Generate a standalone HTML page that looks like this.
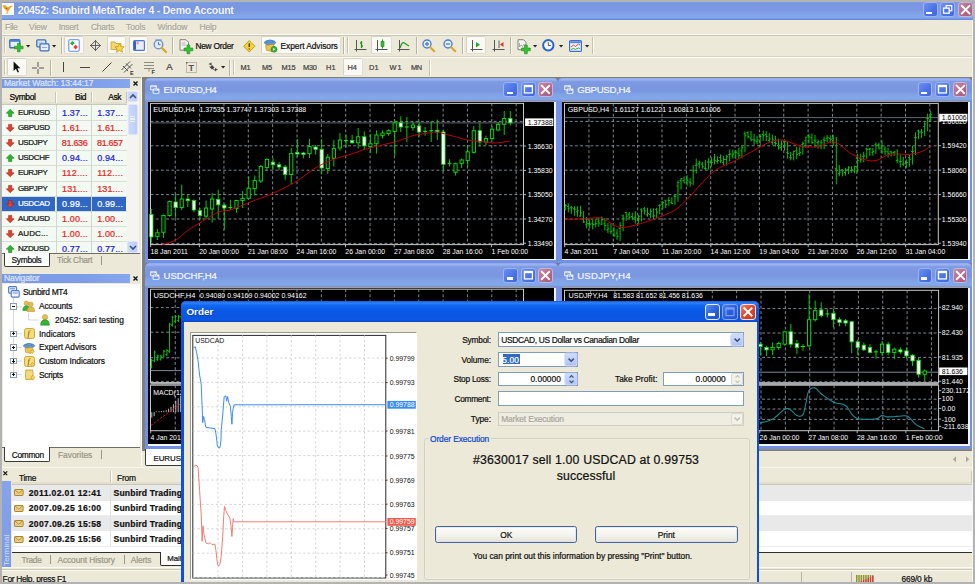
<!DOCTYPE html>
<html lang="en"><head><meta charset="utf-8"><title>20452: Sunbird MetaTrader 4 - Demo Account</title>
<style>
*{box-sizing:border-box;margin:0;padding:0}
html,body{width:975px;height:584px;overflow:hidden;background:#b3b3b3}
body{position:relative;font-family:"Liberation Sans",sans-serif;font-size:10.5px;color:#000;line-height:1}
.a{position:absolute}
.t{position:absolute;white-space:nowrap;line-height:12px;height:12px;-webkit-text-stroke-width:0.22px}
svg{position:absolute;overflow:visible}
#w{position:absolute;left:0;top:0;width:975px;height:584px;overflow:hidden}
#app{left:2px;top:2px;width:971px;height:581px;background:#ece9d8;overflow:hidden}
.title{left:0;top:0;width:971px;height:18px;background:linear-gradient(#6c8ce2 0,#7195e8 35%,#7ea5ec 80%,#7da2ea 90%,#6487e2 100%)}
.tb{border-radius:3px;border:1px solid #9db3f0;background:linear-gradient(135deg,#6f92f0,#4a72e4 60%,#4468dc)}
.tbx{background:linear-gradient(135deg,#c08aa0,#b06a86 60%,#a66080);border-color:#c9b3d8}
.cw{background:#7191e6;border-radius:6px 6px 0 0}
.cwt{left:0;top:0;right:0;height:23px;border-radius:6px 6px 0 0;background:linear-gradient(#829fea 0,#8aa9f0 12%,#7e9eec 50%,#7495e8 85%,#6c8de4 100%)}
.cb{border-radius:3px;border:1px solid #9db4f2;background:linear-gradient(135deg,#6a8ff2,#4a72e6 60%,#4166dc)}
.cbx{background:linear-gradient(135deg,#c58aa2,#b26a88 60%,#a35c7c);border-color:#c8b4dc}
.blk{background:#000}
.pt{background:#738fd6;color:#e8eefc;font-size:10.5px}
.sep{width:1px;background:#aca899;box-shadow:1px 0 0 #fff}
.prs{background:#f6f5ee;border:1px solid #c9c7ba;border-radius:2px;box-shadow:inset 1px 1px 0 #e0dfd4}
</style></head>
<body>
<div id="w">
<div class="a " style="left:2px;top:2px;width:971px;height:581px;background:#ece9d8"></div>
<div class="a " style="left:2px;top:2px;width:971px;height:17.6px;background:linear-gradient(#7aa2e8 0,#7a98e2 9%,#7b97e1 42%,#80a3e7 70%,#83aaea 87%,#6e8ee2 94%,#6a87de 100%)"></div>
<svg class="a" style="left:2px;top:3px;" width="12" height="12" viewBox="0 0 12 12"><rect x="0" y="0" width="12" height="12" fill="#fdfdfb"/><path d="M0.3 2.6 L2.6 2.2 L3 1.4 L4.2 3.2 L6 4.3 L8.2 3 L11 2.8 L8.6 4.6 L6.6 7.4 L5.6 11 L4.6 11 L4.6 7.6 L2.2 5.4 Z" fill="#e9a61c"/><path d="M4.8 8 L5.8 8 L5.4 11.2 L4.7 11.2Z" fill="#f0cf8a"/><circle cx="4.5" cy="5.5" r="0.75" fill="#e2352a"/></svg>
<div class="t " style="left:17.8px;top:4.3px;font-size:10.5px;color:#f6f8ff;font-weight:bold;letter-spacing:-0.244px;text-shadow:0 0 1px #5a78d0;-webkit-text-stroke-width:0;">20452: Sunbird MetaTrader 4 - Demo Account</div>
<div class="a tb" style="left:922.6px;top:2.1px;width:15.3px;height:15.3px;"></div>
<div class="a " style="left:926.17px;top:11.79px;width:6.12px;height:2.45px;background:#fff"></div>
<div class="a tb" style="left:940.1px;top:2.1px;width:15.3px;height:15.3px;"></div>
<svg class="a" style="left:940.1px;top:2.1px;" width="15.3" height="15.3" viewBox="0 0 15.3 15.3"><g transform="scale(1.02)"><rect x="6" y="3.5" width="5.5" height="5" fill="none" stroke="#fff" stroke-width="1.3"/><rect x="3.5" y="6" width="5.5" height="5" fill="#4a72e4" stroke="#fff" stroke-width="1.3"/></g></svg>
<div class="a tb tbx" style="left:957.7px;top:2.1px;width:15.3px;height:15.3px;"></div>
<svg class="a" style="left:957.7px;top:2.1px;" width="15.3" height="15.3" viewBox="0 0 15.3 15.3"><g transform="scale(1.02)"><path d="M3.8 3.8 L11.2 11.2 M11.2 3.8 L3.8 11.2" stroke="#fff" stroke-width="1.9" stroke-linecap="square"/></g></svg>
<div class="t " style="left:5px;top:21.3px;font-size:8.6px;color:#a9a696;letter-spacing:-0.32px;text-shadow:0.7px 0.7px 0 #fbfaf3;">File</div>
<div class="t " style="left:29px;top:21.3px;font-size:8.6px;color:#a9a696;letter-spacing:-0.195px;text-shadow:0.7px 0.7px 0 #fbfaf3;">View</div>
<div class="t " style="left:58.75px;top:21.3px;font-size:8.6px;color:#a9a696;letter-spacing:-0.32px;text-shadow:0.7px 0.7px 0 #fbfaf3;">Insert</div>
<div class="t " style="left:90.9px;top:21.3px;font-size:8.6px;color:#a9a696;letter-spacing:-0.32px;text-shadow:0.7px 0.7px 0 #fbfaf3;">Charts</div>
<div class="t " style="left:126px;top:21.3px;font-size:8.6px;color:#a9a696;letter-spacing:-0.119px;text-shadow:0.7px 0.7px 0 #fbfaf3;">Tools</div>
<div class="t " style="left:157.4px;top:21.3px;font-size:8.6px;color:#a9a696;letter-spacing:-0.078px;text-shadow:0.7px 0.7px 0 #fbfaf3;">Window</div>
<div class="t " style="left:199.4px;top:21.3px;font-size:8.6px;color:#a9a696;letter-spacing:-0.163px;text-shadow:0.7px 0.7px 0 #fbfaf3;">Help</div>
<div class="a " style="left:2px;top:34px;width:971px;height:1px;background:#fbfaf4"></div>
<div class="a " style="left:2px;top:35px;width:971px;height:0.9px;background:#c9c6b6"></div>
<div class="a " style="left:2px;top:56.4px;width:971px;height:0.8px;background:#d6d3c2"></div>
<div class="a " style="left:2px;top:57.2px;width:971px;height:0.8px;background:#fdfcf6"></div>
<div class="a " style="left:4px;top:37.3px;width:1px;height:16px;background:#c5c2b2"></div>
<div class="a " style="left:5px;top:37.3px;width:1px;height:16px;background:#fffef7"></div>
<svg class="a" style="left:9px;top:39.3px;" width="14" height="13" viewBox="0 0 14 13"><rect x="0.8" y="0.8" width="10" height="8" rx="1" fill="#e9f0fb" stroke="#3b6fc4" stroke-width="1.4"/><rect x="0.8" y="0.8" width="10" height="2" fill="#4a80d6"/><path d="M5.5 7.2 h3 v-3 h2.6 v3 h3 v2.6 h-3 v3 h-2.6 v-3 h-3 z" fill="#33c12f" stroke="#1c8a1c" stroke-width="0.6"/></svg>
<svg class="a" style="left:25.7px;top:45.1px;" width="4.2" height="2.4" viewBox="0 0 4.2 2.4"><path d="M0 0 L4.2 0 L2.1 2.4 Z" fill="#222"/></svg>
<svg class="a" style="left:35.5px;top:39.3px;" width="14" height="13" viewBox="0 0 14 13"><rect x="0.8" y="0.8" width="9" height="7" rx="1" fill="#dfe9fa" stroke="#3b6fc4" stroke-width="1.3"/><rect x="4" y="4.8" width="9" height="7" rx="1" fill="#e6eefb" stroke="#3b6fc4" stroke-width="1.3"/><path d="M2.5 4 h5 M6 8.5 h5" stroke="#7a98cc" stroke-width="0.8"/></svg>
<svg class="a" style="left:52.2px;top:45.1px;" width="4.2" height="2.4" viewBox="0 0 4.2 2.4"><path d="M0 0 L4.2 0 L2.1 2.4 Z" fill="#222"/></svg>
<div class="a " style="left:61px;top:37.3px;width:1px;height:17px;background:#b7b4a4"></div>
<div class="a " style="left:62px;top:37.3px;width:1px;height:17px;background:#fbfaf2"></div>
<div class="a " style="left:64.4px;top:36.3px;width:19.5px;height:18px;background:#faf9f4;border:1px solid #e0ded2;border-top-color:#d6d3c4;border-left-color:#d6d3c4;border-radius:2px"></div>
<svg class="a" style="left:68px;top:39.3px;" width="12" height="13" viewBox="0 0 12 13"><rect x="0.7" y="0.7" width="10.6" height="11.6" rx="1.5" fill="#fff" stroke="#79a4ee" stroke-width="1.3"/><path d="M4.3 2 l2.3 2.3 -2.3 2.3 -2.3 -2.3z" fill="#27b027"/><path d="M7.6 5.8 l2.3 2.3 -2.3 2.3 -2.3 -2.3z" fill="#ee3a30"/></svg>
<svg class="a" style="left:90px;top:40.3px;" width="11" height="11" viewBox="0 0 11 11"><path d="M5.5 0.7 L10.3 5.5 L5.5 10.3 L0.7 5.5 Z" fill="none" stroke="#555" stroke-width="1"/><path d="M5.5 0 V11 M0 5.5 H11" stroke="#555" stroke-width="0.9"/></svg>
<div class="a " style="left:107px;top:36.3px;width:19px;height:18px;background:#faf9f4;border:1px solid #e0ded2;border-top-color:#d6d3c4;border-left-color:#d6d3c4;border-radius:2px"></div>
<svg class="a" style="left:109.5px;top:38.8px;" width="15" height="14" viewBox="0 0 15 14"><path d="M1 3 h4 l1 1.5 h5 v6 h-10z" fill="#f6d772" stroke="#c9a227" stroke-width="0.8"/><path d="M9.5 4.5 l1.5 3 3.2 .4 -2.4 2.2 .7 3.2 -3 -1.7 -3 1.7 .7 -3.2 -2.4 -2.2 3.2 -.4z" fill="#f8d648" stroke="#c8961a" stroke-width="0.8"/></svg>
<div class="a " style="left:129px;top:36.3px;width:19px;height:18px;background:#faf9f4;border:1px solid #e0ded2;border-top-color:#d6d3c4;border-left-color:#d6d3c4;border-radius:2px"></div>
<svg class="a" style="left:132.5px;top:39.8px;" width="12" height="11" viewBox="0 0 12 11"><rect x="0.6" y="0.6" width="10.8" height="9.8" rx="1" fill="#e9edfb" stroke="#4a78d2" stroke-width="1.2"/><rect x="1" y="1.2" width="2" height="8.6" fill="#2f5fd0"/><path d="M3.6 2.2 h2 M3.6 3.8 h2" stroke="#e05c4c" stroke-width="0.9"/></svg>
<svg class="a" style="left:153px;top:39.3px;" width="14" height="14" viewBox="0 0 14 14"><circle cx="5.5" cy="5.5" r="4.3" fill="#dfe9f8" stroke="#6a8cc8" stroke-width="1.3"/><path d="M5.5 3 v2.7 h2" stroke="#4a6aa8" stroke-width="0.9" fill="none"/><path d="M8.8 8.8 L13 13" stroke="#d6a62c" stroke-width="2.2" stroke-linecap="round"/><path d="M2 1 h7" stroke="#7a98cc" stroke-width="1"/></svg>
<div class="a " style="left:172.4px;top:37.3px;width:1px;height:17px;background:#b7b4a4"></div>
<div class="a " style="left:173.4px;top:37.3px;width:1px;height:17px;background:#fbfaf2"></div>
<svg class="a" style="left:179px;top:38.8px;" width="14" height="15" viewBox="0 0 14 15"><path d="M1 0.7 h6 l2.5 2.5 v8 h-8.5z" fill="#f4f4f0" stroke="#777" stroke-width="0.9"/><path d="M2.5 4 h4 M2.5 6 h5" stroke="#999" stroke-width="0.7"/><path d="M5 9 h3 v-3 h2.8 v3 h3 v2.8 h-3 v3 h-2.8 v-3 h-3 z" fill="#33c12f" stroke="#1c8a1c" stroke-width="0.6"/></svg>
<div class="t " style="left:195.4px;top:39.8px;font-size:8.4px;color:#111;letter-spacing:-0.251px;">New Order</div>
<svg class="a" style="left:242.5px;top:39.8px;" width="12.5" height="12.5" viewBox="0 0 12.5 12.5"><path d="M6.25 0.6 L11.9 6.25 L6.25 11.9 L0.6 6.25 Z" fill="#f7d23a" stroke="#c79a14" stroke-width="1"/><path d="M6.25 3.3 v3.8 M6.25 8.4 v1" stroke="#333" stroke-width="1.3"/></svg>
<div class="a " style="left:261.4px;top:36.3px;width:79.5px;height:18px;background:#faf9f4;border:1px solid #e0ded2;border-top-color:#d6d3c4;border-left-color:#d6d3c4;border-radius:2px"></div>
<svg class="a" style="left:264px;top:38.8px;" width="13" height="14" viewBox="0 0 13 14"><ellipse cx="6" cy="3.6" rx="5.6" ry="2.4" fill="#5f9ad8" stroke="#3c6eaa" stroke-width="0.7"/><path d="M2.5 3 q3.5 -3.8 7 0z" fill="#6aa6e6" stroke="#3c6eaa" stroke-width="0.6"/><path d="M1.6 6.5 l7 -1.3 2.4 3.2 -2.8 4.2 -5.8 -1.4z" fill="#edc352" stroke="#b98a18" stroke-width="0.7"/><circle cx="10" cy="10.3" r="2.9" fill="#2fb62f" stroke="#1a801a" stroke-width="0.6"/><path d="M9.1 8.9 l2.2 1.4 -2.2 1.4z" fill="#fff"/></svg>
<div class="t " style="left:280.6px;top:39.8px;font-size:8.4px;color:#111;letter-spacing:-0.069px;">Expert Advisors</div>
<div class="a " style="left:343.4px;top:37.3px;width:1px;height:17px;background:#b7b4a4"></div>
<div class="a " style="left:344.4px;top:37.3px;width:1px;height:17px;background:#fbfaf2"></div>
<div class="a " style="left:346.6px;top:37.3px;width:1px;height:16px;background:#c5c2b2"></div>
<div class="a " style="left:347.6px;top:37.3px;width:1px;height:16px;background:#fffef7"></div>
<svg class="a" style="left:353.5px;top:39.3px;" width="13" height="13" viewBox="0 0 13 13"><path d="M2.5 1 V12.5 M0.5 10.5 H12.5" stroke="#555" stroke-width="1" fill="none"/><path d="M0 3.5 l2.5 -2.5 2.5 2.5 M10 8 l2.5 2.5 -2.5 2.5" stroke="#555" stroke-width="0" fill="none"/><path d="M7.5 2 V9 M6 4 h1.5 M7.5 7 h1.5" stroke="#1e9a1e" stroke-width="1.3" fill="none"/></svg>
<div class="a " style="left:371px;top:36.3px;width:20.5px;height:18px;background:#faf9f4;border:1px solid #e0ded2;border-top-color:#d6d3c4;border-left-color:#d6d3c4;border-radius:2px"></div>
<svg class="a" style="left:375px;top:39.3px;" width="13" height="13" viewBox="0 0 13 13"><path d="M2.5 1 V12.5 M0.5 10.5 H12.5" stroke="#555" stroke-width="1" fill="none"/><path d="M0 3.5 l2.5 -2.5 2.5 2.5 M10 8 l2.5 2.5 -2.5 2.5" stroke="#555" stroke-width="0" fill="none"/><path d="M7.5 0.5 V9.5" stroke="#1e9a1e" stroke-width="1"/><rect x="6" y="2.5" width="3" height="5" fill="#2fc02f" stroke="#1e8a1e" stroke-width="0.6"/></svg>
<svg class="a" style="left:397px;top:39.3px;" width="13" height="13" viewBox="0 0 13 13"><path d="M2.5 1 V12.5 M0.5 10.5 H12.5" stroke="#555" stroke-width="1" fill="none"/><path d="M0 3.5 l2.5 -2.5 2.5 2.5 M10 8 l2.5 2.5 -2.5 2.5" stroke="#555" stroke-width="0" fill="none"/><path d="M3 9 Q5 2 7.5 4 T12 7" stroke="#1e9a1e" stroke-width="1.2" fill="none"/></svg>
<div class="a " style="left:415.6px;top:37.3px;width:1px;height:17px;background:#b7b4a4"></div>
<div class="a " style="left:416.6px;top:37.3px;width:1px;height:17px;background:#fbfaf2"></div>
<svg class="a" style="left:422px;top:39.3px;" width="13" height="13" viewBox="0 0 13 13"><circle cx="5" cy="5" r="4" fill="#e6effb" stroke="#4f7fd0" stroke-width="1.4"/><path d="M8.2 8.2 L12.2 12.2" stroke="#d9a92e" stroke-width="2.2" stroke-linecap="round"/><path d="M3 5 h4" stroke="#3f6fc6" stroke-width="1.2"/><path d="M5 3 v4" stroke="#3f6fc6" stroke-width="1.2"/></svg>
<svg class="a" style="left:443px;top:39.3px;" width="13" height="13" viewBox="0 0 13 13"><circle cx="5" cy="5" r="4" fill="#e6effb" stroke="#4f7fd0" stroke-width="1.4"/><path d="M8.2 8.2 L12.2 12.2" stroke="#d9a92e" stroke-width="2.2" stroke-linecap="round"/><path d="M3 5 h4" stroke="#3f6fc6" stroke-width="1.2"/></svg>
<div class="a " style="left:462.4px;top:37.3px;width:1px;height:17px;background:#b7b4a4"></div>
<div class="a " style="left:463.4px;top:37.3px;width:1px;height:17px;background:#fbfaf2"></div>
<div class="a " style="left:466.4px;top:36.3px;width:19.5px;height:18px;background:#faf9f4;border:1px solid #e0ded2;border-top-color:#d6d3c4;border-left-color:#d6d3c4;border-radius:2px"></div>
<svg class="a" style="left:470px;top:39.3px;" width="13" height="13" viewBox="0 0 13 13"><path d="M2.5 1 V12.5 M0.5 10.5 H12.5" stroke="#555" stroke-width="1" fill="none"/><path d="M0 3.5 l2.5 -2.5 2.5 2.5 M10 8 l2.5 2.5 -2.5 2.5" stroke="#555" stroke-width="0" fill="none"/><path d="M6 3 l4 2.7 -4 2.7z" fill="#22a822"/></svg>
<svg class="a" style="left:492px;top:39.3px;" width="13" height="13" viewBox="0 0 13 13"><path d="M2.5 1 V12.5 M0.5 10.5 H12.5" stroke="#555" stroke-width="1" fill="none"/><path d="M0 3.5 l2.5 -2.5 2.5 2.5 M10 8 l2.5 2.5 -2.5 2.5" stroke="#555" stroke-width="0" fill="none"/><path d="M7 1.5 V9" stroke="#555" stroke-width="0.9"/><path d="M11.5 3 l-3.5 2.5 3.5 2.5z" fill="#d8382c"/></svg>
<div class="a " style="left:509.6px;top:37.3px;width:1px;height:17px;background:#b7b4a4"></div>
<div class="a " style="left:510.6px;top:37.3px;width:1px;height:17px;background:#fbfaf2"></div>
<svg class="a" style="left:517px;top:38.8px;" width="14" height="15" viewBox="0 0 14 15"><path d="M1 0.7 h5.5 l2.5 2.5 v7.5 h-8z" fill="#f4f4f0" stroke="#777" stroke-width="0.9"/><path d="M2.5 4 v4 l1.5 -2 1.5 1.5 1.5 -2.5" stroke="#888" stroke-width="0.7" fill="none"/><path d="M4.5 9 h3 v-3 h2.8 v3 h3 v2.8 h-3 v3 h-2.8 v-3 h-3 z" fill="#33c12f" stroke="#1c8a1c" stroke-width="0.6"/></svg>
<svg class="a" style="left:532.8px;top:45.1px;" width="4.2" height="2.4" viewBox="0 0 4.2 2.4"><path d="M0 0 L4.2 0 L2.1 2.4 Z" fill="#222"/></svg>
<svg class="a" style="left:542.4px;top:39.3px;" width="13" height="13" viewBox="0 0 13 13"><circle cx="6.3" cy="6.3" r="5.2" fill="#f4f8ff" stroke="#2f63c8" stroke-width="2"/><path d="M6.3 3.2 v3.3 h2.6" stroke="#444" stroke-width="0.9" fill="none"/></svg>
<svg class="a" style="left:558.9px;top:45.1px;" width="4.2" height="2.4" viewBox="0 0 4.2 2.4"><path d="M0 0 L4.2 0 L2.1 2.4 Z" fill="#222"/></svg>
<svg class="a" style="left:569px;top:39.8px;" width="13" height="12" viewBox="0 0 13 12"><rect x="0.6" y="0.6" width="11.8" height="10.8" rx="1" fill="#eef3fc" stroke="#3f6fc6" stroke-width="1.2"/><rect x="1.2" y="1.2" width="10.6" height="2" fill="#5a8ae0"/><path d="M2 7 l2.5 -2 2 1.5 3 -2.5 1.5 1" stroke="#d8382c" stroke-width="0.9" fill="none"/><path d="M2 9.5 l2.5 -1 2 .8 3 -1.3 1.5 .6" stroke="#22a022" stroke-width="0.9" fill="none"/></svg>
<svg class="a" style="left:585.4px;top:45.1px;" width="4.2" height="2.4" viewBox="0 0 4.2 2.4"><path d="M0 0 L4.2 0 L2.1 2.4 Z" fill="#222"/></svg>
<div class="a " style="left:591.5px;top:37.3px;width:1px;height:17px;background:#c5c2b2"></div>
<div class="a " style="left:592.5px;top:37.3px;width:1px;height:17px;background:#fffef7"></div>
<div class="a " style="left:4px;top:59.5px;width:1px;height:15px;background:#c5c2b2"></div>
<div class="a " style="left:5px;top:59.5px;width:1px;height:15px;background:#fffef7"></div>
<div class="a " style="left:7px;top:58.3px;width:19.5px;height:17.5px;background:#faf9f4;border:1px solid #e0ded2;border-top-color:#d6d3c4;border-left-color:#d6d3c4;border-radius:2px"></div>
<svg class="a" style="left:12.5px;top:61px;" width="8" height="12" viewBox="0 0 8 12"><path d="M0.6 0.5 V10 L2.9 7.8 L4.6 11.6 L6 11 L4.4 7.3 L7.4 7.3 Z" fill="#111"/></svg>
<svg class="a" style="left:32px;top:61.5px;" width="12" height="12" viewBox="0 0 12 12"><path d="M6 0 V12 M0 6 H12" stroke="#555" stroke-width="1"/><rect x="5" y="5" width="2" height="2" fill="#ece9d8"/></svg>
<div class="a " style="left:50.4px;top:59.5px;width:1px;height:16px;background:#b7b4a4"></div>
<div class="a " style="left:51.4px;top:59.5px;width:1px;height:16px;background:#fbfaf2"></div>
<div class="a " style="left:63px;top:62px;width:1px;height:10px;background:#444"></div>
<div class="a " style="left:80px;top:66.6px;width:10px;height:1px;background:#444"></div>
<svg class="a" style="left:102px;top:62px;" width="10" height="10" viewBox="0 0 10 10"><path d="M0.5 9.5 L9.5 0.5" stroke="#444" stroke-width="1"/></svg>
<svg class="a" style="left:121px;top:60.5px;" width="13" height="14" viewBox="0 0 13 14"><path d="M0.5 9 L9 0.5 M3 11.5 L11.5 3 M2 5 l5 5 M5 2.5 l5 5" stroke="#555" stroke-width="1" fill="none"/><text x="9" y="13.5" font-size="5.5" font-weight="bold" fill="#333" font-family="Liberation Sans, sans-serif">E</text></svg>
<svg class="a" style="left:143.5px;top:61px;" width="12" height="13" viewBox="0 0 12 13"><path d="M0 1.5 H10 M0 4.5 H10 M0 7.5 H10" stroke="#8a8a80" stroke-width="1" fill="none"/><path d="M5 7.5 V10.5" stroke="#8a8a80" stroke-width="1"/><text x="7.5" y="13" font-size="5.5" font-weight="bold" fill="#333" font-family="Liberation Sans, sans-serif">F</text></svg>
<div class="t " style="left:166.3px;top:61.3px;font-size:9.6px;color:#3c3c3c;">A</div>
<svg class="a" style="left:186px;top:61.5px;" width="11" height="11" viewBox="0 0 11 11"><rect x="0.5" y="0.5" width="10" height="10" fill="none" stroke="#b4b2a6" stroke-width="0.9"/><rect x="0" y="0" width="1.4" height="1.4" fill="#555"/><text x="2.6" y="9" font-size="9" font-weight="bold" fill="#555" font-family="Liberation Sans, sans-serif">T</text></svg>
<svg class="a" style="left:208px;top:62px;" width="11" height="10" viewBox="0 0 11 10"><path d="M0.5 2 l3 -1.5 0 3z M4 3 l2.5 2.5 -2.5 2 -2 -2z M7 6 l3 1.5 -3 1.5z" fill="#444"/><path d="M1.5 4.5 L8 9" stroke="#444" stroke-width="0.8"/></svg>
<svg class="a" style="left:221.2px;top:66.3px;" width="4.2" height="2.4" viewBox="0 0 4.2 2.4"><path d="M0 0 L4.2 0 L2.1 2.4 Z" fill="#222"/></svg>
<div class="a " style="left:229.4px;top:59.5px;width:1px;height:16px;background:#b7b4a4"></div>
<div class="a " style="left:230.4px;top:59.5px;width:1px;height:16px;background:#fbfaf2"></div>
<div class="a " style="left:233px;top:59.5px;width:1px;height:15px;background:#c5c2b2"></div>
<div class="a " style="left:234px;top:59.5px;width:1px;height:15px;background:#fffef7"></div>
<div class="a " style="left:342.6px;top:58.3px;width:20px;height:17.5px;background:#faf9f4;border:1px solid #e0ded2;border-top-color:#d6d3c4;border-left-color:#d6d3c4;border-radius:2px"></div>
<div class="t " style="left:240.6px;top:61.7px;font-size:7.4px;color:#444;letter-spacing:-0.28px;">M1</div>
<div class="t " style="left:262px;top:61.7px;font-size:7.4px;color:#444;letter-spacing:-0.28px;">M5</div>
<div class="t " style="left:281.4px;top:61.7px;font-size:7.4px;color:#444;letter-spacing:-0.098px;">M15</div>
<div class="t " style="left:303px;top:61.7px;font-size:7.4px;color:#444;letter-spacing:-0.198px;">M30</div>
<div class="t " style="left:326px;top:61.7px;font-size:7.4px;color:#444;letter-spacing:0.14px;">H1</div>
<div class="t " style="left:347.4px;top:61.7px;font-size:7.4px;color:#444;letter-spacing:0.14px;">H4</div>
<div class="t " style="left:369px;top:61.7px;font-size:7.4px;color:#444;letter-spacing:0.14px;">D1</div>
<div class="t " style="left:389.5px;top:61.7px;font-size:7.4px;color:#444;letter-spacing:1px;">W1</div>
<div class="t " style="left:411px;top:61.7px;font-size:7.4px;color:#444;letter-spacing:-0.32px;">MN</div>
<div class="a " style="left:428.6px;top:59.5px;width:1px;height:16px;background:#c5c2b2"></div>
<div class="a " style="left:429.6px;top:59.5px;width:1px;height:16px;background:#fffef7"></div>
<div class="a " style="left:2px;top:76.6px;width:971px;height:0.8px;background:#a9a796"></div>
<div class="a " style="left:2px;top:78.5px;width:127.6px;height:9.6px;background:linear-gradient(90deg,#7c9ae4,#7d9ce8 60%,#86a6ee)"></div>
<div class="t " style="left:4px;top:77.4px;font-size:8.6px;color:#dde6fb;letter-spacing:-0.066px;">Market Watch: 13:44:17</div>
<svg class="a" style="left:133.2px;top:80.9px;" width="5" height="5" viewBox="0 0 5 5"><path d="M0.5 0.5 L4.5 4.5 M4.5 0.5 L0.5 4.5" stroke="#111" stroke-width="1.3"/></svg>
<div class="a " style="left:2px;top:90.4px;width:125px;height:14.8px;background:#ece9d8;border-bottom:1px solid #cbc7b8;box-shadow:inset 0 -2px 0 #e2dfcf"></div>
<div class="t " style="left:9.5px;top:91.3px;font-size:8.4px;color:#000;letter-spacing:-0.32px;">Symbol</div>
<div class="t " style="left:74.9px;top:91.3px;font-size:8.4px;color:#000;letter-spacing:-0.32px;">Bid</div>
<div class="t " style="left:108.24px;top:91.3px;font-size:8.4px;color:#000;letter-spacing:-0.32px;">Ask</div>
<div class="a " style="left:55.4px;top:92px;width:1px;height:11px;background:#c9c6b6"></div>
<div class="a " style="left:56.4px;top:92px;width:1px;height:11px;background:#fff"></div>
<div class="a " style="left:90.6px;top:92px;width:1px;height:11px;background:#c9c6b6"></div>
<div class="a " style="left:91.6px;top:92px;width:1px;height:11px;background:#fff"></div>
<div class="a " style="left:125.6px;top:92px;width:1px;height:11px;background:#c9c6b6"></div>
<div class="a " style="left:2px;top:105.2px;width:124.6px;height:148px;background:#f3faf2;overflow:hidden"></div>
<svg class="a" style="left:6px;top:108.7px;" width="8.4" height="8" viewBox="0 0 8.4 8"><path d="M4.2 0.3 L8.1 4.2 H5.8 V7.6 H2.6 V4.2 H0.3 Z" fill="#2fb52f" stroke="#1c7d1c" stroke-width="0.6"/></svg>
<div class="t " style="left:17.9px;top:106.7px;font-size:8px;color:#111;letter-spacing:-0.32px;">EURUSD</div>
<div class="t " style="left:62px;top:106.7px;font-size:9px;color:#1a1af0;letter-spacing:0.13px;">1.37...</div>
<div class="t " style="left:97.2px;top:106.7px;font-size:9px;color:#1a1af0;letter-spacing:0.13px;">1.37...</div>
<div class="a " style="left:2px;top:119.97px;width:124.6px;height:0.8px;background:#d9dcd6"></div>
<svg class="a" style="left:6px;top:123.87px;" width="8.4" height="8" viewBox="0 0 8.4 8"><path d="M4.2 7.7 L8.1 3.8 H5.8 V0.4 H2.6 V3.8 H0.3 Z" fill="#e2402e" stroke="#a52416" stroke-width="0.6"/></svg>
<div class="t " style="left:17.9px;top:121.87px;font-size:8px;color:#111;letter-spacing:-0.32px;">GBPUSD</div>
<div class="t " style="left:62px;top:121.87px;font-size:9px;color:#f01c1c;letter-spacing:0.13px;">1.61...</div>
<div class="t " style="left:97.2px;top:121.87px;font-size:9px;color:#f01c1c;letter-spacing:0.13px;">1.61...</div>
<div class="a " style="left:2px;top:135.14px;width:124.6px;height:0.8px;background:#d9dcd6"></div>
<svg class="a" style="left:6px;top:139.04px;" width="8.4" height="8" viewBox="0 0 8.4 8"><path d="M4.2 7.7 L8.1 3.8 H5.8 V0.4 H2.6 V3.8 H0.3 Z" fill="#e2402e" stroke="#a52416" stroke-width="0.6"/></svg>
<div class="t " style="left:17.9px;top:137.04px;font-size:8px;color:#111;letter-spacing:-0.32px;">USDJPY</div>
<div class="t " style="left:61.87px;top:137.04px;font-size:9px;color:#f01c1c;letter-spacing:-0.32px;">81.636</div>
<div class="t " style="left:97.07px;top:137.04px;font-size:9px;color:#f01c1c;letter-spacing:-0.32px;">81.657</div>
<div class="a " style="left:2px;top:150.31px;width:124.6px;height:0.8px;background:#d9dcd6"></div>
<svg class="a" style="left:6px;top:154.21px;" width="8.4" height="8" viewBox="0 0 8.4 8"><path d="M4.2 0.3 L8.1 4.2 H5.8 V7.6 H2.6 V4.2 H0.3 Z" fill="#2fb52f" stroke="#1c7d1c" stroke-width="0.6"/></svg>
<div class="t " style="left:17.9px;top:152.21px;font-size:8px;color:#111;letter-spacing:-0.32px;">USDCHF</div>
<div class="t " style="left:62px;top:152.21px;font-size:9px;color:#1a1af0;letter-spacing:0.13px;">0.94...</div>
<div class="t " style="left:97.2px;top:152.21px;font-size:9px;color:#1a1af0;letter-spacing:0.13px;">0.94...</div>
<div class="a " style="left:2px;top:165.48px;width:124.6px;height:0.8px;background:#d9dcd6"></div>
<svg class="a" style="left:6px;top:169.38px;" width="8.4" height="8" viewBox="0 0 8.4 8"><path d="M4.2 7.7 L8.1 3.8 H5.8 V0.4 H2.6 V3.8 H0.3 Z" fill="#e2402e" stroke="#a52416" stroke-width="0.6"/></svg>
<div class="t " style="left:17.9px;top:167.38px;font-size:8px;color:#111;letter-spacing:-0.32px;">EURJPY</div>
<div class="t " style="left:62px;top:167.38px;font-size:9px;color:#f01c1c;letter-spacing:0.242px;">112....</div>
<div class="t " style="left:97.2px;top:167.38px;font-size:9px;color:#f01c1c;letter-spacing:0.242px;">112....</div>
<div class="a " style="left:2px;top:180.65px;width:124.6px;height:0.8px;background:#d9dcd6"></div>
<svg class="a" style="left:6px;top:184.55px;" width="8.4" height="8" viewBox="0 0 8.4 8"><path d="M4.2 7.7 L8.1 3.8 H5.8 V0.4 H2.6 V3.8 H0.3 Z" fill="#e2402e" stroke="#a52416" stroke-width="0.6"/></svg>
<div class="t " style="left:17.9px;top:182.55px;font-size:8px;color:#111;letter-spacing:-0.32px;">GBPJPY</div>
<div class="t " style="left:62px;top:182.55px;font-size:9px;color:#f01c1c;letter-spacing:0.13px;">131....</div>
<div class="t " style="left:97.2px;top:182.55px;font-size:9px;color:#f01c1c;letter-spacing:0.13px;">131....</div>
<div class="a " style="left:2px;top:195.82px;width:124.6px;height:0.8px;background:#d9dcd6"></div>
<div class="a " style="left:2px;top:196.62px;width:53.4px;height:14.2px;background:#2f67c4"></div>
<div class="a " style="left:56.6px;top:196.62px;width:34px;height:14.2px;background:#2f67c4"></div>
<div class="a " style="left:91.8px;top:196.62px;width:34px;height:14.2px;background:#2f67c4"></div>
<svg class="a" style="left:6px;top:199.72px;" width="8.4" height="8" viewBox="0 0 8.4 8"><path d="M4.2 7.7 L8.1 3.8 H5.8 V0.4 H2.6 V3.8 H0.3 Z" fill="#e2402e" stroke="#a52416" stroke-width="0.6"/></svg>
<div class="t " style="left:17.9px;top:197.72px;font-size:8px;color:#fff;letter-spacing:-0.32px;">USDCAD</div>
<div class="t " style="left:62px;top:197.72px;font-size:9px;color:#fff;letter-spacing:0.13px;">0.99...</div>
<div class="t " style="left:97.2px;top:197.72px;font-size:9px;color:#fff;letter-spacing:0.13px;">0.99...</div>
<div class="a " style="left:2px;top:210.99px;width:124.6px;height:0.8px;background:#d9dcd6"></div>
<svg class="a" style="left:6px;top:214.89px;" width="8.4" height="8" viewBox="0 0 8.4 8"><path d="M4.2 7.7 L8.1 3.8 H5.8 V0.4 H2.6 V3.8 H0.3 Z" fill="#e2402e" stroke="#a52416" stroke-width="0.6"/></svg>
<div class="t " style="left:17.9px;top:212.89px;font-size:8px;color:#111;letter-spacing:-0.32px;">AUDUSD</div>
<div class="t " style="left:62px;top:212.89px;font-size:9px;color:#f01c1c;letter-spacing:0.13px;">1.00...</div>
<div class="t " style="left:97.2px;top:212.89px;font-size:9px;color:#f01c1c;letter-spacing:0.13px;">1.00...</div>
<div class="a " style="left:2px;top:226.16px;width:124.6px;height:0.8px;background:#d9dcd6"></div>
<svg class="a" style="left:6px;top:230.06px;" width="8.4" height="8" viewBox="0 0 8.4 8"><path d="M4.2 7.7 L8.1 3.8 H5.8 V0.4 H2.6 V3.8 H0.3 Z" fill="#e2402e" stroke="#a52416" stroke-width="0.6"/></svg>
<div class="t " style="left:17.9px;top:228.06px;font-size:8px;color:#111;letter-spacing:0.111px;">AUDC...</div>
<div class="t " style="left:62px;top:228.06px;font-size:9px;color:#f01c1c;letter-spacing:0.13px;">1.00...</div>
<div class="t " style="left:97.2px;top:228.06px;font-size:9px;color:#f01c1c;letter-spacing:0.13px;">1.00...</div>
<div class="a " style="left:2px;top:241.33px;width:124.6px;height:0.8px;background:#d9dcd6"></div>
<div class="a" style="left:0;top:0;width:975px;height:253px;overflow:hidden;pointer-events:none">
<svg class="a" style="left:6px;top:245.23px;" width="8.4" height="8" viewBox="0 0 8.4 8"><path d="M4.2 0.3 L8.1 4.2 H5.8 V7.6 H2.6 V4.2 H0.3 Z" fill="#2fb52f" stroke="#1c7d1c" stroke-width="0.6"/></svg>
</div>
<div class="t " style="left:17.9px;top:243.23px;font-size:8px;color:#111;letter-spacing:-0.32px;">NZDUSD</div>
<div class="t " style="left:62px;top:243.23px;font-size:9px;color:#1a1af0;letter-spacing:0.13px;">0.77...</div>
<div class="t " style="left:97.2px;top:243.23px;font-size:9px;color:#1a1af0;letter-spacing:0.13px;">0.77...</div>
<div class="a " style="left:55.6px;top:105.2px;width:1px;height:148px;background:#d3d6d0"></div>
<div class="a " style="left:90.8px;top:105.2px;width:1px;height:148px;background:#d3d6d0"></div>
<div class="a " style="left:126.6px;top:90.4px;width:12.6px;height:162.8px;background:#f5f4ee"></div>
<div class="a " style="left:127.4px;top:90.6px;width:11px;height:11.4px;background:linear-gradient(90deg,#ccdafb,#bccdf8);border:1px solid #dbe5fd;border-radius:2px"></div>
<svg class="a" style="left:129px;top:94px;" width="8" height="5" viewBox="0 0 8 5"><path d="M1 4 L4 1 L7 4" stroke="#3c4f86" stroke-width="1.6" fill="none"/></svg>
<div class="a " style="left:127.4px;top:241.2px;width:11px;height:11.4px;background:linear-gradient(90deg,#ccdafb,#bccdf8);border:1px solid #dbe5fd;border-radius:2px"></div>
<svg class="a" style="left:129px;top:244.6px;" width="8" height="5" viewBox="0 0 8 5"><path d="M1 1 L4 4 L7 1" stroke="#3c4f86" stroke-width="1.6" fill="none"/></svg>
<div class="a " style="left:127.6px;top:104px;width:10.6px;height:31px;background:linear-gradient(90deg,#cbd9fc,#bccdf9);border:1px solid #dbe5fd;border-radius:2px"></div>
<div class="a " style="left:130.4px;top:116px;width:5px;height:0.8px;background:#e9effd"></div>
<div class="a " style="left:130.4px;top:117.6px;width:5px;height:0.8px;background:#e9effd"></div>
<div class="a " style="left:130.4px;top:119.2px;width:5px;height:0.8px;background:#e9effd"></div>
<div class="a " style="left:130.4px;top:120.8px;width:5px;height:0.8px;background:#e9effd"></div>
<div class="a " style="left:2px;top:253.2px;width:138px;height:0.8px;background:#6f6d62"></div>
<div class="a " style="left:3.6px;top:253.2px;width:46.6px;height:13.6px;background:#fff;border:1px solid #3a3a36;border-top:none;border-radius:0 0 2px 2px"></div>
<div class="t " style="left:11.6px;top:254.2px;font-size:8.4px;color:#111;letter-spacing:-0.32px;">Symbols</div>
<div class="t " style="left:57px;top:254.2px;font-size:8.4px;color:#9a9787;letter-spacing:-0.251px;">Tick Chart</div>
<div class="a " style="left:101.4px;top:255.6px;width:1px;height:9px;background:#9a9787"></div>
<div class="a " style="left:2px;top:273.5px;width:127.6px;height:9.6px;background:linear-gradient(90deg,#7c9ae4,#7d9ce8 60%,#86a6ee)"></div>
<div class="t " style="left:4px;top:272.4px;font-size:8.6px;color:#dde6fb;letter-spacing:-0.151px;">Navigator</div>
<svg class="a" style="left:133.2px;top:275.9px;" width="5" height="5" viewBox="0 0 5 5"><path d="M0.5 0.5 L4.5 4.5 M4.5 0.5 L0.5 4.5" stroke="#111" stroke-width="1.3"/></svg>
<div class="a " style="left:2.6px;top:283.6px;width:137px;height:163.8px;background:#fff"></div>
<svg class="a" style="left:0px;top:0px;" width="975" height="584" viewBox="0 0 975 584"><path d="M13.5 298 V375 M16.8 306.9 H22 M16.8 333.8 H22 M16.8 347.4 H22 M16.8 361.1 H22 M16.8 374.7 H22 M28.5 313 V320 H39" stroke="#cdcdcd" stroke-width="0.8" fill="none"/></svg>
<div class="a " style="left:10.3px;top:303.3px;width:6.4px;height:6.4px;background:#fff;border:0.8px solid #8a9cb8"></div>
<div class="a " style="left:11.8px;top:306.1px;width:3.4px;height:0.8px;background:#111"></div>
<div class="a " style="left:10.3px;top:330.6px;width:6.4px;height:6.4px;background:#fff;border:0.8px solid #8a9cb8"></div>
<div class="a " style="left:11.8px;top:333.4px;width:3.4px;height:0.8px;background:#111"></div>
<div class="a " style="left:13.1px;top:332.1px;width:0.8px;height:3.4px;background:#111"></div>
<div class="a " style="left:10.3px;top:344.2px;width:6.4px;height:6.4px;background:#fff;border:0.8px solid #8a9cb8"></div>
<div class="a " style="left:11.8px;top:347px;width:3.4px;height:0.8px;background:#111"></div>
<div class="a " style="left:13.1px;top:345.7px;width:0.8px;height:3.4px;background:#111"></div>
<div class="a " style="left:10.3px;top:357.9px;width:6.4px;height:6.4px;background:#fff;border:0.8px solid #8a9cb8"></div>
<div class="a " style="left:11.8px;top:360.7px;width:3.4px;height:0.8px;background:#111"></div>
<div class="a " style="left:13.1px;top:359.4px;width:0.8px;height:3.4px;background:#111"></div>
<div class="a " style="left:10.3px;top:371.5px;width:6.4px;height:6.4px;background:#fff;border:0.8px solid #8a9cb8"></div>
<div class="a " style="left:11.8px;top:374.3px;width:3.4px;height:0.8px;background:#111"></div>
<div class="a " style="left:13.1px;top:373px;width:0.8px;height:3.4px;background:#111"></div>
<svg class="a" style="left:7.5px;top:286px;" width="12" height="12" viewBox="0 0 12 12"><rect x="0.6" y="0.6" width="8" height="6.5" rx="1" fill="#eef3fc" stroke="#4a7ad0" stroke-width="1.1"/><rect x="3.2" y="4.6" width="8" height="6.5" rx="1" fill="#f4f7fd" stroke="#4a7ad0" stroke-width="1.1"/><path d="M2 2.8 h5 M4.8 7 h5" stroke="#4a7ad0" stroke-width="0.9"/></svg>
<svg class="a" style="left:22px;top:300px;" width="13" height="12" viewBox="0 0 13 12"><circle cx="4.5" cy="3.3" r="2.3" fill="#e7bd55" stroke="#b8902c" stroke-width="0.5"/><path d="M0.8 10.5 q0 -4.8 3.7 -4.8 t3.7 4.8z" fill="#35b535" stroke="#1f851f" stroke-width="0.5"/><circle cx="8.8" cy="4.3" r="2.3" fill="#e7bd55" stroke="#b8902c" stroke-width="0.5"/><path d="M5 11.5 q0 -4.8 3.8 -4.8 t3.8 4.8z" fill="#e2b84c" stroke="#b08a28" stroke-width="0.5"/></svg>
<svg class="a" style="left:40px;top:314.2px;" width="10" height="11.6" viewBox="0 0 10 11.6"><circle cx="5" cy="3.2" r="2.6" fill="#e7bd55" stroke="#b8902c" stroke-width="0.5"/><path d="M0.6 11.2 q0 -5.4 4.4 -5.4 t4.4 5.4z" fill="#35b535" stroke="#1f851f" stroke-width="0.5"/></svg>
<svg class="a" style="left:23.6px;top:328.3px;" width="11.5" height="11.5" viewBox="0 0 11.5 11.5"><rect x="0.5" y="0.5" width="10" height="10" rx="2" fill="#f6dc78" stroke="#c9a22c" stroke-width="0.9"/><text x="3.6" y="8.3" font-size="8" font-style="italic" font-family="Liberation Serif, serif" fill="#6a5010">f</text></svg>
<svg class="a" style="left:22.5px;top:341.5px;" width="13" height="12" viewBox="0 0 13 12"><ellipse cx="6" cy="3.8" rx="5.6" ry="2.2" fill="#5f9ad8" stroke="#3c6eaa" stroke-width="0.6"/><path d="M2.8 3.2 q3.2 -3.6 6.4 0z" fill="#6aa6e6" stroke="#3c6eaa" stroke-width="0.5"/><path d="M2 6.3 l6.5 -1 2 2.8 -2.6 3.4 -5.2 -1.2z" fill="#edc352" stroke="#b98a18" stroke-width="0.6"/><path d="M9.3 7.6 l2 2 -2 2 -2 -2z" fill="#f3d35a" stroke="#b8902c" stroke-width="0.6"/></svg>
<svg class="a" style="left:23.6px;top:355.6px;" width="11.5" height="11.5" viewBox="0 0 11.5 11.5"><rect x="0.5" y="0.5" width="10" height="10" rx="2" fill="#f6dc78" stroke="#c9a22c" stroke-width="0.9"/><text x="3.6" y="8.3" font-size="8" font-style="italic" font-family="Liberation Serif, serif" fill="#6a5010">f</text><path d="M8.5 6.5 l2.2 2.2 -2.2 2.2 -2.2 -2.2z" fill="#f3d35a" stroke="#b8902c" stroke-width="0.6"/></svg>
<svg class="a" style="left:24px;top:369px;" width="11.5" height="11.5" viewBox="0 0 11.5 11.5"><path d="M1.5 1 h7.5 q-1 1.2 0 2.2 v5 q-1 1 0 2.2 h-7.5 q1 -1.2 0 -2.2 v-5 q1 -1 0 -2.2z" fill="#f3d978" stroke="#c29c2a" stroke-width="0.8"/><path d="M8.8 6.3 l2.2 2.2 -2.2 2.2 -2.2 -2.2z" fill="#f3d35a" stroke="#b8902c" stroke-width="0.6"/></svg>
<div class="t " style="left:23px;top:286px;font-size:8.4px;color:#111;letter-spacing:-0.319px;">Sunbird MT4</div>
<div class="t " style="left:39px;top:300.4px;font-size:8.4px;color:#111;letter-spacing:-0.136px;">Accounts</div>
<div class="t " style="left:55px;top:314px;font-size:8.4px;color:#111;letter-spacing:0.02px;">20452: sari testing</div>
<div class="t " style="left:39px;top:327.8px;font-size:8.4px;color:#111;">Indicators</div>
<div class="t " style="left:39px;top:341.4px;font-size:8.4px;color:#111;letter-spacing:-0.047px;">Expert Advisors</div>
<div class="t " style="left:39px;top:355.1px;font-size:8.4px;color:#111;letter-spacing:-0.093px;">Custom Indicators</div>
<div class="t " style="left:39px;top:368.7px;font-size:8.4px;color:#111;letter-spacing:-0.245px;">Scripts</div>
<div class="a " style="left:2px;top:447.4px;width:138px;height:0.8px;background:#6f6d62"></div>
<div class="a " style="left:3.6px;top:447.4px;width:46.8px;height:14.2px;background:#fff;border:1px solid #3a3a36;border-top:none;border-radius:0 0 2px 2px"></div>
<div class="t " style="left:11.7px;top:448.6px;font-size:8.4px;color:#111;letter-spacing:-0.32px;">Common</div>
<div class="t " style="left:58px;top:448.6px;font-size:8.4px;color:#9a9787;letter-spacing:-0.018px;">Favorites</div>
<div class="a " style="left:100.8px;top:449.6px;width:1px;height:9px;background:#9a9787"></div>
<div class="a " style="left:141.4px;top:77.4px;width:1px;height:389px;background:#fdfcf6"></div>
<div class="a " style="left:142.4px;top:77.4px;width:830.6px;height:376px;background:#7f7f7f"></div>
<div class="a " style="left:144.8px;top:77.5px;width:413.4px;height:185.9px;background:#7391e4;border-radius:5px 5px 0 0"></div>
<div class="a " style="left:144.8px;top:77.5px;width:413.4px;height:23.4px;border-radius:5px 5px 0 0;background:linear-gradient(#8ea9ea 0,#9cb5f1 7%,#7e9ae3 16%,#7a96e0 55%,#80a2e6 72%,#83a9ea 92%,#7490e2 100%)"></div>
<svg class="a" style="left:150.4px;top:85.3px;" width="9.5" height="9" viewBox="0 0 9.5 9"><rect x="0.2" y="0.2" width="6.6" height="5" rx="0.8" fill="#f4f7ff"/><rect x="1.2" y="2.2" width="4.6" height="2.2" fill="#6f90e6"/><rect x="2.6" y="3.6" width="6.8" height="5.2" rx="0.8" fill="#f4f7ff"/><rect x="3.6" y="5.6" width="4.8" height="2.3" fill="#6f90e6"/><path d="M1.4 1.3 h1.2 M3.2 1.3 h1.2 M3.8 4.7 h1.2 M5.6 4.7 h1.2" stroke="#6f90e6" stroke-width="0.7"/></svg>
<div class="t " style="left:163.6px;top:84.2px;font-size:9.6px;color:#f4f7ff;letter-spacing:-0.26px;">EURUSD,H4</div>
<div class="a cb" style="left:503.3px;top:82.1px;width:14.9px;height:14.9px;"></div>
<div class="a " style="left:506.78px;top:91.54px;width:5.96px;height:2.38px;background:#fff"></div>
<div class="a cb" style="left:520.8px;top:82.1px;width:14.9px;height:14.9px;"></div>
<svg class="a" style="left:520.8px;top:82.1px;" width="14.9" height="14.9" viewBox="0 0 14.9 14.9"><g transform="scale(0.993333)"><rect x="3.5" y="3.5" width="8" height="7.5" fill="none" stroke="#fff" stroke-width="1.3"/><rect x="3" y="3" width="9" height="2.2" fill="#fff"/></g></svg>
<div class="a cb cbx" style="left:538.4px;top:82.1px;width:14.9px;height:14.9px;"></div>
<svg class="a" style="left:538.4px;top:82.1px;" width="14.9" height="14.9" viewBox="0 0 14.9 14.9"><g transform="scale(0.993333)"><path d="M3.8 3.8 L11.2 11.2 M11.2 3.8 L3.8 11.2" stroke="#fff" stroke-width="1.9" stroke-linecap="square"/></g></svg>
<div class="a " style="left:148px;top:100.8px;width:406.2px;height:0.9px;background:#a89e8c"></div>
<div class="a " style="left:148px;top:101.7px;width:407.6px;height:158.3px;background:#f2f4fc"></div>
<div class="a " style="left:148px;top:101.7px;width:406.2px;height:156.9px;background:#000"></div>
<svg class="a" style="left:0px;top:0px;" width="975" height="584" viewBox="0 0 975 584"><rect x="150.50" y="103.40" width="373.00" height="141.20" fill="none" stroke="#c9c9c9" stroke-width="1"/><g stroke="#98a4b0" stroke-width="0.82" stroke-dasharray="2.9 2.3" fill="none"><path d="M175.25 103.40 V244.60" /><path d="M199.60 103.40 V244.60" /><path d="M223.95 103.40 V244.60" /><path d="M248.30 103.40 V244.60" /><path d="M272.65 103.40 V244.60" /><path d="M297.00 103.40 V244.60" /><path d="M321.35 103.40 V244.60" /><path d="M345.70 103.40 V244.60" /><path d="M370.05 103.40 V244.60" /><path d="M394.40 103.40 V244.60" /><path d="M418.75 103.40 V244.60" /><path d="M443.10 103.40 V244.60" /><path d="M467.45 103.40 V244.60" /><path d="M491.80 103.40 V244.60" /><path d="M516.15 103.40 V244.60" /><path d="M150.50 121.40 H523.50" /><path d="M150.50 145.80 H523.50" /><path d="M150.50 170.20 H523.50" /><path d="M150.50 194.60 H523.50" /><path d="M150.50 219.00 H523.50" /><path d="M150.50 243.40 H523.50" /></g><path d="M150.50 122.9 H523.50" stroke="#76828f" stroke-width="0.8"/><path d="M151.30 209.00 V242.50" stroke="#00d800" stroke-width="0.95"/><rect x="149.60" y="214.50" width="3.4" height="22.50" fill="#ffffff" stroke="#00e000" stroke-width="0.8"/><path d="M157.39 229.00 V240.00" stroke="#00d800" stroke-width="0.95"/><rect x="155.79" y="232.80" width="3.2" height="3.60" fill="#000" stroke="#00e000" stroke-width="0.95"/><path d="M163.47 214.50 V238.00" stroke="#00d800" stroke-width="0.95"/><rect x="161.87" y="215.50" width="3.2" height="16.80" fill="#000" stroke="#00e000" stroke-width="0.95"/><path d="M169.56 200.50 V216.60" stroke="#00d800" stroke-width="0.95"/><rect x="167.96" y="201.50" width="3.2" height="14.00" fill="#000" stroke="#00e000" stroke-width="0.95"/><path d="M175.64 194.00 V217.70" stroke="#00d800" stroke-width="0.95"/><rect x="173.94" y="202.00" width="3.4" height="5.60" fill="#ffffff" stroke="#00e000" stroke-width="0.8"/><path d="M181.73 184.70 V210.00" stroke="#00d800" stroke-width="0.95"/><rect x="180.13" y="199.00" width="3.2" height="8.60" fill="#000" stroke="#00e000" stroke-width="0.95"/><path d="M187.81 194.60 V207.00" stroke="#00d800" stroke-width="0.95"/><rect x="186.11" y="199.00" width="3.4" height="1.70" fill="#ffffff" stroke="#00e000" stroke-width="0.8"/><path d="M193.90 199.40 V212.30" stroke="#00d800" stroke-width="0.95"/><rect x="192.20" y="200.50" width="3.4" height="9.50" fill="#ffffff" stroke="#00e000" stroke-width="0.8"/><path d="M199.98 208.00 V219.80" stroke="#00d800" stroke-width="0.95"/><rect x="198.28" y="210.60" width="3.4" height="4.90" fill="#ffffff" stroke="#00e000" stroke-width="0.8"/><path d="M206.06 200.50 V218.80" stroke="#00d800" stroke-width="0.95"/><rect x="204.47" y="208.00" width="3.2" height="8.20" fill="#000" stroke="#00e000" stroke-width="0.95"/><path d="M212.15 193.00 V222.60" stroke="#00d800" stroke-width="0.95"/><rect x="210.55" y="199.00" width="3.2" height="10.00" fill="#000" stroke="#00e000" stroke-width="0.95"/><path d="M218.24 189.70 V218.80" stroke="#00d800" stroke-width="0.95"/><rect x="216.54" y="199.40" width="3.4" height="5.40" fill="#ffffff" stroke="#00e000" stroke-width="0.8"/><path d="M224.32 203.70 V229.50" stroke="#00d800" stroke-width="0.95"/><rect x="222.62" y="205.20" width="3.4" height="2.80" fill="#ffffff" stroke="#00e000" stroke-width="0.8"/><path d="M230.41 199.80 V210.00" stroke="#00d800" stroke-width="0.95"/><path d="M228.51 207.60 H232.31" stroke="#00ff00" stroke-width="1"/><path d="M236.49 199.80 V212.70" stroke="#00d800" stroke-width="0.95"/><rect x="234.89" y="200.50" width="3.2" height="7.90" fill="#000" stroke="#00e000" stroke-width="0.95"/><path d="M242.58 191.20 V208.00" stroke="#00d800" stroke-width="0.95"/><rect x="240.98" y="198.30" width="3.2" height="2.20" fill="#000" stroke="#00e000" stroke-width="0.95"/><path d="M248.66 176.60 V199.40" stroke="#00d800" stroke-width="0.95"/><rect x="247.06" y="188.20" width="3.2" height="10.10" fill="#000" stroke="#00e000" stroke-width="0.95"/><path d="M254.75 175.50 V195.50" stroke="#00d800" stroke-width="0.95"/><rect x="253.15" y="180.60" width="3.2" height="8.00" fill="#000" stroke="#00e000" stroke-width="0.95"/><path d="M260.83 164.80 V183.00" stroke="#00d800" stroke-width="0.95"/><rect x="259.23" y="166.50" width="3.2" height="14.50" fill="#000" stroke="#00e000" stroke-width="0.95"/><path d="M266.92 158.30 V170.80" stroke="#00d800" stroke-width="0.95"/><rect x="265.31" y="159.40" width="3.2" height="8.00" fill="#000" stroke="#00e000" stroke-width="0.95"/><path d="M273.00 158.30 V170.20" stroke="#00d800" stroke-width="0.95"/><rect x="271.30" y="162.20" width="3.4" height="2.60" fill="#ffffff" stroke="#00e000" stroke-width="0.8"/><path d="M279.09 162.20 V170.20" stroke="#00d800" stroke-width="0.95"/><rect x="277.39" y="164.80" width="3.4" height="2.20" fill="#ffffff" stroke="#00e000" stroke-width="0.8"/><path d="M285.17 164.80 V179.80" stroke="#00d800" stroke-width="0.95"/><rect x="283.47" y="167.00" width="3.4" height="7.50" fill="#ffffff" stroke="#00e000" stroke-width="0.8"/><path d="M291.25 148.00 V184.00" stroke="#00d800" stroke-width="0.95"/><rect x="289.65" y="153.60" width="3.2" height="20.90" fill="#000" stroke="#00e000" stroke-width="0.95"/><path d="M297.34 139.00 V157.00" stroke="#00d800" stroke-width="0.95"/><rect x="295.64" y="152.50" width="3.4" height="1.50" fill="#ffffff" stroke="#00e000" stroke-width="0.8"/><path d="M303.43 151.80 V158.30" stroke="#00d800" stroke-width="0.95"/><rect x="301.73" y="153.00" width="3.4" height="1.40" fill="#ffffff" stroke="#00e000" stroke-width="0.8"/><path d="M309.51 139.00 V157.90" stroke="#00d800" stroke-width="0.95"/><rect x="307.91" y="146.50" width="3.2" height="7.10" fill="#000" stroke="#00e000" stroke-width="0.95"/><path d="M315.60 145.00 V154.40" stroke="#00d800" stroke-width="0.95"/><rect x="313.90" y="147.00" width="3.4" height="2.30" fill="#ffffff" stroke="#00e000" stroke-width="0.8"/><path d="M321.68 139.00 V174.50" stroke="#00d800" stroke-width="0.95"/><rect x="319.98" y="149.30" width="3.4" height="18.70" fill="#ffffff" stroke="#00e000" stroke-width="0.8"/><path d="M327.76 154.00 V173.80" stroke="#00d800" stroke-width="0.95"/><rect x="326.16" y="157.20" width="3.2" height="11.40" fill="#000" stroke="#00e000" stroke-width="0.95"/><path d="M333.85 140.00 V166.50" stroke="#00d800" stroke-width="0.95"/><rect x="332.25" y="148.60" width="3.2" height="9.70" fill="#000" stroke="#00e000" stroke-width="0.95"/><path d="M339.94 133.00 V150.80" stroke="#00d800" stroke-width="0.95"/><rect x="338.33" y="140.00" width="3.2" height="8.00" fill="#000" stroke="#00e000" stroke-width="0.95"/><path d="M346.02 134.60 V147.50" stroke="#00d800" stroke-width="0.95"/><path d="M344.12 140.60 H347.92" stroke="#00ff00" stroke-width="1"/><path d="M352.11 135.00 V143.70" stroke="#00d800" stroke-width="0.95"/><rect x="350.41" y="140.40" width="3.4" height="2.40" fill="#ffffff" stroke="#00e000" stroke-width="0.8"/><path d="M358.19 128.00 V148.60" stroke="#00d800" stroke-width="0.95"/><rect x="356.59" y="136.80" width="3.2" height="6.00" fill="#000" stroke="#00e000" stroke-width="0.95"/><path d="M364.27 131.40 V149.70" stroke="#00d800" stroke-width="0.95"/><rect x="362.57" y="136.80" width="3.4" height="9.00" fill="#ffffff" stroke="#00e000" stroke-width="0.8"/><path d="M370.36 134.00 V153.00" stroke="#00d800" stroke-width="0.95"/><rect x="368.76" y="143.70" width="3.2" height="2.80" fill="#000" stroke="#00e000" stroke-width="0.95"/><path d="M376.45 130.30 V153.60" stroke="#00d800" stroke-width="0.95"/><rect x="374.85" y="135.00" width="3.2" height="8.70" fill="#000" stroke="#00e000" stroke-width="0.95"/><path d="M382.53 130.30 V138.50" stroke="#00d800" stroke-width="0.95"/><rect x="380.93" y="133.00" width="3.2" height="2.70" fill="#000" stroke="#00e000" stroke-width="0.95"/><path d="M388.62 129.20 V135.70" stroke="#00d800" stroke-width="0.95"/><rect x="387.01" y="130.70" width="3.2" height="2.80" fill="#000" stroke="#00e000" stroke-width="0.95"/><path d="M394.70 119.50 V155.70" stroke="#00d800" stroke-width="0.95"/><rect x="393.10" y="122.80" width="3.2" height="8.60" fill="#000" stroke="#00e000" stroke-width="0.95"/><path d="M400.78 116.30 V132.00" stroke="#00d800" stroke-width="0.95"/><rect x="399.08" y="122.80" width="3.4" height="4.20" fill="#ffffff" stroke="#00e000" stroke-width="0.8"/><path d="M406.87 117.00 V142.00" stroke="#00d800" stroke-width="0.95"/><path d="M404.97 127.00 H408.77" stroke="#00ff00" stroke-width="1"/><path d="M412.95 122.00 V130.70" stroke="#00d800" stroke-width="0.95"/><rect x="411.35" y="125.00" width="3.2" height="2.70" fill="#000" stroke="#00e000" stroke-width="0.95"/><path d="M419.04 121.30 V136.80" stroke="#00d800" stroke-width="0.95"/><rect x="417.34" y="126.00" width="3.4" height="6.00" fill="#ffffff" stroke="#00e000" stroke-width="0.8"/><path d="M425.12 127.00 V135.70" stroke="#00d800" stroke-width="0.95"/><path d="M423.23 131.40 H427.02" stroke="#00ff00" stroke-width="1"/><path d="M431.21 121.30 V142.00" stroke="#00d800" stroke-width="0.95"/><path d="M429.31 130.70 H433.11" stroke="#00ff00" stroke-width="1"/><path d="M437.30 119.50 V140.00" stroke="#00d800" stroke-width="0.95"/><rect x="435.60" y="130.30" width="3.4" height="1.70" fill="#ffffff" stroke="#00e000" stroke-width="0.8"/><path d="M443.38 130.00 V171.20" stroke="#00d800" stroke-width="0.95"/><rect x="441.68" y="132.00" width="3.4" height="32.30" fill="#ffffff" stroke="#00e000" stroke-width="0.8"/><path d="M449.47 159.40 V166.50" stroke="#00d800" stroke-width="0.95"/><path d="M447.57 163.30 H451.37" stroke="#00ff00" stroke-width="1"/><path d="M455.55 162.60 V175.50" stroke="#00d800" stroke-width="0.95"/><rect x="453.95" y="163.70" width="3.2" height="8.60" fill="#000" stroke="#00e000" stroke-width="0.95"/><path d="M461.63 158.70 V168.00" stroke="#00d800" stroke-width="0.95"/><rect x="460.03" y="160.00" width="3.2" height="3.70" fill="#000" stroke="#00e000" stroke-width="0.95"/><path d="M467.72 145.80 V167.00" stroke="#00d800" stroke-width="0.95"/><rect x="466.12" y="151.80" width="3.2" height="8.70" fill="#000" stroke="#00e000" stroke-width="0.95"/><path d="M473.81 126.00 V153.60" stroke="#00d800" stroke-width="0.95"/><rect x="472.20" y="130.70" width="3.2" height="21.60" fill="#000" stroke="#00e000" stroke-width="0.95"/><path d="M479.89 122.80 V146.50" stroke="#00d800" stroke-width="0.95"/><rect x="478.19" y="130.70" width="3.4" height="11.30" fill="#ffffff" stroke="#00e000" stroke-width="0.8"/><path d="M485.98 135.70 V145.00" stroke="#00d800" stroke-width="0.95"/><rect x="484.38" y="138.50" width="3.2" height="3.50" fill="#000" stroke="#00e000" stroke-width="0.95"/><path d="M492.06 126.00 V140.00" stroke="#00d800" stroke-width="0.95"/><rect x="490.46" y="129.20" width="3.2" height="9.30" fill="#000" stroke="#00e000" stroke-width="0.95"/><path d="M498.14 122.00 V131.40" stroke="#00d800" stroke-width="0.95"/><rect x="496.54" y="124.30" width="3.2" height="5.70" fill="#000" stroke="#00e000" stroke-width="0.95"/><path d="M504.23 111.00 V135.00" stroke="#00d800" stroke-width="0.95"/><rect x="502.63" y="118.50" width="3.2" height="5.80" fill="#000" stroke="#00e000" stroke-width="0.95"/><path d="M510.31 111.00 V125.60" stroke="#00d800" stroke-width="0.95"/><rect x="508.62" y="118.50" width="3.4" height="4.30" fill="#ffffff" stroke="#00e000" stroke-width="0.8"/><polyline points="162.4,244.6 163.8,244.2 165.8,243.7 168.1,243.1 170.6,242.3 173.0,241.4 175.3,240.3 177.4,239.0 179.5,237.4 181.5,235.7 183.5,233.9 185.6,232.2 187.6,230.6 189.5,229.2 191.4,228.0 193.2,226.9 195.1,225.7 197.2,224.4 199.6,223.0 202.4,221.3 205.5,219.4 208.8,217.3 212.1,215.4 215.2,213.6 218.0,212.3 220.4,211.5 222.5,211.0 224.4,210.8 226.2,210.6 228.1,210.4 230.0,210.0 232.0,209.4 234.1,208.6 236.2,207.9 238.2,207.0 240.3,206.2 242.3,205.4 244.2,204.6 246.1,203.9 247.9,203.1 249.8,202.3 251.9,201.4 254.3,200.5 256.9,199.5 259.7,198.5 262.7,197.5 265.9,196.3 269.2,195.0 272.7,193.5 276.5,191.7 280.6,189.8 284.9,187.6 289.1,185.4 293.2,183.2 297.0,181.0 300.4,178.8 303.6,176.5 306.5,174.3 309.4,172.0 312.3,169.9 315.3,168.0 318.3,166.3 321.3,164.7 324.4,163.2 327.4,161.9 330.4,160.6 333.4,159.4 336.5,158.3 339.6,157.3 342.8,156.4 345.9,155.6 348.8,154.8 351.5,154.0 353.9,153.2 356.0,152.5 357.9,151.8 359.8,151.1 361.8,150.4 364.0,149.7 366.5,149.0 369.1,148.3 371.9,147.5 374.6,146.8 377.4,146.2 380.0,145.5 382.6,144.9 385.3,144.2 388.0,143.6 390.5,143.0 392.8,142.5 394.7,142.0 396.1,141.6 397.1,141.3 397.9,141.0 398.6,140.8 399.4,140.4 400.7,140.0 402.4,139.4 404.3,138.7 406.4,137.9 408.5,137.1 410.7,136.3 412.8,135.7 414.8,135.2 416.9,134.8 418.9,134.4 420.9,134.1 423.0,133.8 425.0,133.5 427.1,133.2 429.2,132.8 431.4,132.5 433.5,132.3 435.3,132.1 437.0,132.0 438.3,132.1 439.2,132.2 440.0,132.5 440.7,132.8 441.7,133.1 443.0,133.5 444.7,133.9 446.7,134.5 448.8,135.0 451.1,135.6 453.3,136.2 455.4,136.8 457.4,137.4 459.4,137.9 461.5,138.5 463.5,139.1 465.5,139.6 467.5,140.0 469.5,140.3 471.6,140.6 473.7,140.8 475.7,140.9 477.8,141.1 479.8,141.3 481.9,141.6 484.0,141.8 486.2,142.1 488.2,142.4 490.1,142.6 491.8,142.8 493.1,142.9 494.0,143.0 494.8,143.0 495.6,143.0 496.6,142.9 497.9,142.8 499.7,142.6 501.9,142.3 504.3,141.9 506.6,141.5 508.6,141.2 510.0,141.0" fill="none" stroke="#c40000" stroke-width="1" stroke-linejoin="round" /><path d="M523.50 146.00 h2.6" stroke="#c9c9c9" stroke-width="0.9"/><text x="527.70" y="148.50" font-size="6.9" fill="#fff" text-anchor="start" font-family="Liberation Sans, sans-serif" >1.36630</text><path d="M523.50 170.40 h2.6" stroke="#c9c9c9" stroke-width="0.9"/><text x="527.70" y="172.90" font-size="6.9" fill="#fff" text-anchor="start" font-family="Liberation Sans, sans-serif" >1.35830</text><path d="M523.50 194.60 h2.6" stroke="#c9c9c9" stroke-width="0.9"/><text x="527.70" y="197.10" font-size="6.9" fill="#fff" text-anchor="start" font-family="Liberation Sans, sans-serif" >1.35050</text><path d="M523.50 219.00 h2.6" stroke="#c9c9c9" stroke-width="0.9"/><text x="527.70" y="221.50" font-size="6.9" fill="#fff" text-anchor="start" font-family="Liberation Sans, sans-serif" >1.34270</text><path d="M523.50 243.20 h2.6" stroke="#c9c9c9" stroke-width="0.9"/><text x="527.70" y="245.70" font-size="6.9" fill="#fff" text-anchor="start" font-family="Liberation Sans, sans-serif" >1.33490</text><rect x="525.10" y="118.40" width="28.2" height="7.6" fill="#fff"/><text x="527.70" y="124.70" font-size="6.9" fill="#000" text-anchor="start" font-family="Liberation Sans, sans-serif" >1.37388</text><path d="M150.70 244.60 v2.6" stroke="#c9c9c9" stroke-width="0.9"/><text x="150.50" y="254.20" font-size="6.9" fill="#fff" text-anchor="start" font-family="Liberation Sans, sans-serif" >18 Jan 2011</text><path d="M199.40 244.60 v2.6" stroke="#c9c9c9" stroke-width="0.9"/><text x="199.20" y="254.20" font-size="6.9" fill="#fff" text-anchor="start" font-family="Liberation Sans, sans-serif" >20 Jan 00:00</text><path d="M248.10 244.60 v2.6" stroke="#c9c9c9" stroke-width="0.9"/><text x="247.90" y="254.20" font-size="6.9" fill="#fff" text-anchor="start" font-family="Liberation Sans, sans-serif" >21 Jan 08:00</text><path d="M296.80 244.60 v2.6" stroke="#c9c9c9" stroke-width="0.9"/><text x="296.60" y="254.20" font-size="6.9" fill="#fff" text-anchor="start" font-family="Liberation Sans, sans-serif" >24 Jan 16:00</text><path d="M345.50 244.60 v2.6" stroke="#c9c9c9" stroke-width="0.9"/><text x="345.30" y="254.20" font-size="6.9" fill="#fff" text-anchor="start" font-family="Liberation Sans, sans-serif" >26 Jan 00:00</text><path d="M394.20 244.60 v2.6" stroke="#c9c9c9" stroke-width="0.9"/><text x="394.00" y="254.20" font-size="6.9" fill="#fff" text-anchor="start" font-family="Liberation Sans, sans-serif" >27 Jan 08:00</text><path d="M442.90 244.60 v2.6" stroke="#c9c9c9" stroke-width="0.9"/><text x="442.70" y="254.20" font-size="6.9" fill="#fff" text-anchor="start" font-family="Liberation Sans, sans-serif" >28 Jan 16:00</text><path d="M491.60 244.60 v2.6" stroke="#c9c9c9" stroke-width="0.9"/><text x="491.40" y="254.20" font-size="6.9" fill="#fff" text-anchor="start" font-family="Liberation Sans, sans-serif" >1 Feb 00:00</text><text x="153.30" y="112.40" font-size="6.9" fill="#fff" text-anchor="start" font-family="Liberation Sans, sans-serif" textLength="41.4" lengthAdjust="spacingAndGlyphs">EURUSD,H4</text><text x="199.40" y="112.40" font-size="6.9" fill="#fff" text-anchor="start" font-family="Liberation Sans, sans-serif" textLength="106.8" lengthAdjust="spacingAndGlyphs">1.37535 1.37747 1.37303 1.37388</text></svg>
<div class="a " style="left:558.4px;top:77.5px;width:414px;height:185.9px;background:#7391e4;border-radius:5px 5px 0 0"></div>
<div class="a " style="left:558.4px;top:77.5px;width:414px;height:23.4px;border-radius:5px 5px 0 0;background:linear-gradient(#8ea9ea 0,#9cb5f1 7%,#7e9ae3 16%,#7a96e0 55%,#80a2e6 72%,#83a9ea 92%,#7490e2 100%)"></div>
<svg class="a" style="left:564px;top:85.3px;" width="9.5" height="9" viewBox="0 0 9.5 9"><rect x="0.2" y="0.2" width="6.6" height="5" rx="0.8" fill="#f4f7ff"/><rect x="1.2" y="2.2" width="4.6" height="2.2" fill="#6f90e6"/><rect x="2.6" y="3.6" width="6.8" height="5.2" rx="0.8" fill="#f4f7ff"/><rect x="3.6" y="5.6" width="4.8" height="2.3" fill="#6f90e6"/><path d="M1.4 1.3 h1.2 M3.2 1.3 h1.2 M3.8 4.7 h1.2 M5.6 4.7 h1.2" stroke="#6f90e6" stroke-width="0.7"/></svg>
<div class="t " style="left:577.2px;top:84.2px;font-size:9.6px;color:#f4f7ff;letter-spacing:-0.26px;">GBPUSD,H4</div>
<div class="a cb" style="left:917.5px;top:82.1px;width:14.9px;height:14.9px;"></div>
<div class="a " style="left:920.98px;top:91.54px;width:5.96px;height:2.38px;background:#fff"></div>
<div class="a cb" style="left:935px;top:82.1px;width:14.9px;height:14.9px;"></div>
<svg class="a" style="left:935px;top:82.1px;" width="14.9" height="14.9" viewBox="0 0 14.9 14.9"><g transform="scale(0.993333)"><rect x="3.5" y="3.5" width="8" height="7.5" fill="none" stroke="#fff" stroke-width="1.3"/><rect x="3" y="3" width="9" height="2.2" fill="#fff"/></g></svg>
<div class="a cb cbx" style="left:952.6px;top:82.1px;width:14.9px;height:14.9px;"></div>
<svg class="a" style="left:952.6px;top:82.1px;" width="14.9" height="14.9" viewBox="0 0 14.9 14.9"><g transform="scale(0.993333)"><path d="M3.8 3.8 L11.2 11.2 M11.2 3.8 L3.8 11.2" stroke="#fff" stroke-width="1.9" stroke-linecap="square"/></g></svg>
<div class="a " style="left:561.6px;top:100.8px;width:406.8px;height:0.9px;background:#a89e8c"></div>
<div class="a " style="left:561.6px;top:101.7px;width:408.2px;height:158.3px;background:#f2f4fc"></div>
<div class="a " style="left:561.6px;top:101.7px;width:406.8px;height:156.9px;background:#000"></div>
<svg class="a" style="left:0px;top:0px;" width="975" height="584" viewBox="0 0 975 584"><rect x="564.50" y="103.40" width="373.80" height="141.20" fill="none" stroke="#c9c9c9" stroke-width="1"/><g stroke="#98a4b0" stroke-width="0.82" stroke-dasharray="2.9 2.3" fill="none"><path d="M588.95 103.40 V244.60" /><path d="M613.30 103.40 V244.60" /><path d="M637.65 103.40 V244.60" /><path d="M662.00 103.40 V244.60" /><path d="M686.35 103.40 V244.60" /><path d="M710.70 103.40 V244.60" /><path d="M735.05 103.40 V244.60" /><path d="M759.40 103.40 V244.60" /><path d="M783.75 103.40 V244.60" /><path d="M808.10 103.40 V244.60" /><path d="M832.45 103.40 V244.60" /><path d="M856.80 103.40 V244.60" /><path d="M881.15 103.40 V244.60" /><path d="M905.50 103.40 V244.60" /><path d="M929.85 103.40 V244.60" /><path d="M564.50 121.40 H938.30" /><path d="M564.50 145.80 H938.30" /><path d="M564.50 170.20 H938.30" /><path d="M564.50 194.60 H938.30" /><path d="M564.50 219.00 H938.30" /><path d="M564.50 243.40 H938.30" /></g><path d="M564.50 117.6 H938.30" stroke="#76828f" stroke-width="0.8"/><g stroke="#00d000" stroke-width="0.95" fill="none"><path d="M565.30 203.97 V210.37 M565.30 208.27 h-1.4 M565.30 205.26 h1.4" /><path d="M568.34 203.37 V212.27 M568.34 206.40 h-1.4 M568.34 208.74 h1.4" /><path d="M571.39 206.18 V213.71 M571.39 207.68 h-1.4 M571.39 207.79 h1.4" /><path d="M574.43 206.16 V215.74 M574.43 208.74 h-1.4 M574.43 209.25 h1.4" /><path d="M577.48 206.29 V216.73 M577.48 211.70 h-1.4 M577.48 210.76 h1.4" /><path d="M580.52 205.78 V216.64 M580.52 215.96 h-1.4 M580.52 213.00 h1.4" /><path d="M583.57 211.23 V222.96 M583.57 219.19 h-1.4 M583.57 221.83 h1.4" /><path d="M586.61 217.20 V228.38 M586.61 224.84 h-1.4 M586.61 223.45 h1.4" /><path d="M589.66 219.96 V228.28 M589.66 223.39 h-1.4 M589.66 224.15 h1.4" /><path d="M592.70 219.58 V229.44 M592.70 223.19 h-1.4 M592.70 224.60 h1.4" /><path d="M595.75 218.78 V227.51 M595.75 224.16 h-1.4 M595.75 223.67 h1.4" /><path d="M598.79 217.93 V226.87 M598.79 221.24 h-1.4 M598.79 223.06 h1.4" /><path d="M601.84 216.37 V225.03 M601.84 224.21 h-1.4 M601.84 219.73 h1.4" /><path d="M604.88 217.97 V230.34 M604.88 223.71 h-1.4 M604.88 225.46 h1.4" /><path d="M607.93 222.99 V233.05 M607.93 229.89 h-1.4 M607.93 228.89 h1.4" /><path d="M610.97 223.31 V234.20 M610.97 231.81 h-1.4 M610.97 231.29 h1.4" /><path d="M614.02 226.54 V236.94 M614.02 234.85 h-1.4 M614.02 235.39 h1.4" /><path d="M617.06 229.16 V239.89 M617.06 233.08 h-1.4 M617.06 236.41 h1.4" /><path d="M620.11 222.23 V240.94 M620.11 228.37 h-1.4 M620.11 225.58 h1.4" /><path d="M623.15 214.63 V231.24 M623.15 215.78 h-1.4 M623.15 218.06 h1.4" /><path d="M626.20 211.86 V221.04 M626.20 212.50 h-1.4 M626.20 216.19 h1.4" /><path d="M629.24 211.98 V218.60 M629.24 214.84 h-1.4 M629.24 217.33 h1.4" /><path d="M632.29 212.75 V220.07 M632.29 216.49 h-1.4 M632.29 218.23 h1.4" /><path d="M635.33 211.21 V223.68 M635.33 217.37 h-1.4 M635.33 218.08 h1.4" /><path d="M638.38 214.75 V223.75 M638.38 220.68 h-1.4 M638.38 216.48 h1.4" /><path d="M641.42 208.23 V221.44 M641.42 209.81 h-1.4 M641.42 211.12 h1.4" /><path d="M644.47 206.91 V214.54 M644.47 208.72 h-1.4 M644.47 210.88 h1.4" /><path d="M647.51 207.72 V216.73 M647.51 214.88 h-1.4 M647.51 213.51 h1.4" /><path d="M650.56 208.47 V217.87 M650.56 214.41 h-1.4 M650.56 211.18 h1.4" /><path d="M653.60 208.22 V219.15 M653.60 216.20 h-1.4 M653.60 215.81 h1.4" /><path d="M656.65 207.81 V217.93 M656.65 209.40 h-1.4 M656.65 212.16 h1.4" /><path d="M659.69 204.30 V214.08 M659.69 205.38 h-1.4 M659.69 205.14 h1.4" /><path d="M662.74 201.03 V209.46 M662.74 201.92 h-1.4 M662.74 202.71 h1.4" /><path d="M665.78 199.97 V208.09 M665.78 200.23 h-1.4 M665.78 204.64 h1.4" /><path d="M668.83 197.07 V205.57 M668.83 200.15 h-1.4 M668.83 200.64 h1.4" /><path d="M671.87 197.26 V204.23 M671.87 202.64 h-1.4 M671.87 203.39 h1.4" /><path d="M674.92 194.50 V204.78 M674.92 196.24 h-1.4 M674.92 196.32 h1.4" /><path d="M677.96 180.68 V201.64 M677.96 185.89 h-1.4 M677.96 182.42 h1.4" /><path d="M681.01 177.94 V189.62 M681.01 180.56 h-1.4 M681.01 178.57 h1.4" /><path d="M684.05 176.27 V182.90 M684.05 180.56 h-1.4 M684.05 182.90 h1.4" /><path d="M687.10 175.25 V185.70 M687.10 179.83 h-1.4 M687.10 180.38 h1.4" /><path d="M690.14 178.14 V186.68 M690.14 181.98 h-1.4 M690.14 183.26 h1.4" /><path d="M693.19 165.16 V184.92 M693.19 170.23 h-1.4 M693.19 171.13 h1.4" /><path d="M696.23 158.69 V173.59 M696.23 165.47 h-1.4 M696.23 165.06 h1.4" /><path d="M699.28 160.69 V168.64 M699.28 163.83 h-1.4 M699.28 162.13 h1.4" /><path d="M702.32 162.09 V168.63 M702.32 164.09 h-1.4 M702.32 166.34 h1.4" /><path d="M705.37 159.88 V169.93 M705.37 168.37 h-1.4 M705.37 168.64 h1.4" /><path d="M708.41 158.10 V169.67 M708.41 162.10 h-1.4 M708.41 162.14 h1.4" /><path d="M711.46 157.48 V166.61 M711.46 161.16 h-1.4 M711.46 162.59 h1.4" /><path d="M714.50 154.01 V164.44 M714.50 159.89 h-1.4 M714.50 160.66 h1.4" /><path d="M717.55 156.43 V163.61 M717.55 161.23 h-1.4 M717.55 160.56 h1.4" /><path d="M720.59 154.30 V163.18 M720.59 157.58 h-1.4 M720.59 160.75 h1.4" /><path d="M723.64 155.79 V164.98 M723.64 162.47 h-1.4 M723.64 159.47 h1.4" /><path d="M726.68 154.79 V165.44 M726.68 159.64 h-1.4 M726.68 156.75 h1.4" /><path d="M729.73 149.57 V161.35 M729.73 154.49 h-1.4 M729.73 153.97 h1.4" /><path d="M732.77 149.51 V158.46 M732.77 155.92 h-1.4 M732.77 154.24 h1.4" /><path d="M735.82 149.90 V158.88 M735.82 152.81 h-1.4 M735.82 152.20 h1.4" /><path d="M738.86 147.70 V159.21 M738.86 153.34 h-1.4 M738.86 155.46 h1.4" /><path d="M741.91 145.31 V158.40 M741.91 150.80 h-1.4 M741.91 147.60 h1.4" /><path d="M744.95 131.69 V152.44 M744.95 133.54 h-1.4 M744.95 135.34 h1.4" /><path d="M748.00 131.32 V138.63 M748.00 132.63 h-1.4 M748.00 136.68 h1.4" /><path d="M751.04 131.02 V141.46 M751.04 138.03 h-1.4 M751.04 139.69 h1.4" /><path d="M754.09 133.85 V145.26 M754.09 139.93 h-1.4 M754.09 140.09 h1.4" /><path d="M757.13 135.85 V144.15 M757.13 141.38 h-1.4 M757.13 140.04 h1.4" /><path d="M760.18 134.20 V146.65 M760.18 134.91 h-1.4 M760.18 136.48 h1.4" /><path d="M763.22 130.73 V140.79 M763.22 134.55 h-1.4 M763.22 135.55 h1.4" /><path d="M766.27 131.28 V141.12 M766.27 134.17 h-1.4 M766.27 136.53 h1.4" /><path d="M769.31 133.02 V142.23 M769.31 140.36 h-1.4 M769.31 138.98 h1.4" /><path d="M772.36 134.74 V144.99 M772.36 142.30 h-1.4 M772.36 139.86 h1.4" /><path d="M775.40 135.80 V146.52 M775.40 142.57 h-1.4 M775.40 143.51 h1.4" /><path d="M778.45 138.66 V149.66 M778.45 145.44 h-1.4 M778.45 147.85 h1.4" /><path d="M781.49 140.53 V150.76 M781.49 147.47 h-1.4 M781.49 143.92 h1.4" /><path d="M784.54 139.45 V150.58 M784.54 145.41 h-1.4 M784.54 141.76 h1.4" /><path d="M787.58 140.85 V158.50 M787.58 152.47 h-1.4 M787.58 153.34 h1.4" /><path d="M790.63 152.05 V160.28 M790.63 157.21 h-1.4 M790.63 157.80 h1.4" /><path d="M793.67 150.42 V160.43 M793.67 154.14 h-1.4 M793.67 151.45 h1.4" /><path d="M796.72 146.87 V158.81 M796.72 150.63 h-1.4 M796.72 154.45 h1.4" /><path d="M799.76 147.20 V156.05 M799.76 153.42 h-1.4 M799.76 152.60 h1.4" /><path d="M802.81 141.49 V154.66 M802.81 144.49 h-1.4 M802.81 143.57 h1.4" /><path d="M805.85 136.64 V147.83 M805.85 140.82 h-1.4 M805.85 137.16 h1.4" /><path d="M808.90 133.70 V143.47 M808.90 135.36 h-1.4 M808.90 136.99 h1.4" /><path d="M811.94 133.47 V144.00 M811.94 137.69 h-1.4 M811.94 142.48 h1.4" /><path d="M814.99 135.04 V147.69 M814.99 140.12 h-1.4 M814.99 140.96 h1.4" /><path d="M818.03 139.65 V148.59 M818.03 142.51 h-1.4 M818.03 141.77 h1.4" /><path d="M821.08 139.95 V149.22 M821.08 145.57 h-1.4 M821.08 142.65 h1.4" /><path d="M824.12 136.55 V149.25 M824.12 139.80 h-1.4 M824.12 140.47 h1.4" /><path d="M827.17 135.10 V142.01 M827.17 138.76 h-1.4 M827.17 137.40 h1.4" /><path d="M830.21 135.15 V143.19 M830.21 138.48 h-1.4 M830.21 139.35 h1.4" /><path d="M833.26 135.12 V146.01 M833.26 138.61 h-1.4 M833.26 142.75 h1.4" /><path d="M836.30 136.87 V184.30 M836.30 168.57 h-1.4 M836.30 170.51 h1.4" /><path d="M839.35 165.04 V176.32 M839.35 173.65 h-1.4 M839.35 172.15 h1.4" /><path d="M842.39 169.47 V176.43 M842.39 169.88 h-1.4 M842.39 170.67 h1.4" /><path d="M845.44 167.75 V175.59 M845.44 172.50 h-1.4 M845.44 170.06 h1.4" /><path d="M848.48 166.19 V174.12 M848.48 169.40 h-1.4 M848.48 167.69 h1.4" /><path d="M851.53 166.23 V172.64 M851.53 170.65 h-1.4 M851.53 169.70 h1.4" /><path d="M854.57 165.67 V173.35 M854.57 170.93 h-1.4 M854.57 166.63 h1.4" /><path d="M857.62 153.59 V172.46 M857.62 158.59 h-1.4 M857.62 160.35 h1.4" /><path d="M860.66 153.63 V162.63 M860.66 158.26 h-1.4 M860.66 159.80 h1.4" /><path d="M863.71 151.86 V162.35 M863.71 156.44 h-1.4 M863.71 156.07 h1.4" /><path d="M866.75 147.61 V158.87 M866.75 148.98 h-1.4 M866.75 149.38 h1.4" /><path d="M869.80 147.95 V156.07 M869.80 149.30 h-1.4 M869.80 148.82 h1.4" /><path d="M872.84 147.90 V155.66 M872.84 152.50 h-1.4 M872.84 151.46 h1.4" /><path d="M875.89 142.43 V153.75 M875.89 144.65 h-1.4 M875.89 145.52 h1.4" /><path d="M878.93 142.81 V149.56 M878.93 144.49 h-1.4 M878.93 148.12 h1.4" /><path d="M881.98 140.20 V153.65 M881.98 148.17 h-1.4 M881.98 151.92 h1.4" /><path d="M885.02 146.11 V155.33 M885.02 149.19 h-1.4 M885.02 151.17 h1.4" /><path d="M888.07 147.87 V157.42 M888.07 151.86 h-1.4 M888.07 153.44 h1.4" /><path d="M891.11 151.00 V156.66 M891.11 151.28 h-1.4 M891.11 152.89 h1.4" /><path d="M894.16 150.88 V155.89 M894.16 152.40 h-1.4 M894.16 152.02 h1.4" /><path d="M897.20 149.14 V163.32 M897.20 160.53 h-1.4 M897.20 160.05 h1.4" /><path d="M900.25 154.54 V167.57 M900.25 161.79 h-1.4 M900.25 161.46 h1.4" /><path d="M903.29 156.81 V166.00 M903.29 164.29 h-1.4 M903.29 163.87 h1.4" /><path d="M906.34 159.25 V168.20 M906.34 163.83 h-1.4 M906.34 162.45 h1.4" /><path d="M909.38 154.76 V166.79 M909.38 157.63 h-1.4 M909.38 159.63 h1.4" /><path d="M912.43 145.70 V164.58 M912.43 151.30 h-1.4 M912.43 151.41 h1.4" /><path d="M915.47 132.42 V154.97 M915.47 137.64 h-1.4 M915.47 137.70 h1.4" /><path d="M918.52 129.74 V139.19 M918.52 130.96 h-1.4 M918.52 132.15 h1.4" /><path d="M921.56 128.91 V137.95 M921.56 131.95 h-1.4 M921.56 132.31 h1.4" /><path d="M924.61 122.17 V136.23 M924.61 126.52 h-1.4 M924.61 123.99 h1.4" /><path d="M927.65 113.57 V131.37 M927.65 118.54 h-1.4 M927.65 118.71 h1.4" /><path d="M930.70 110.96 V121.14 M930.70 116.70 h-1.4 M930.70 114.18 h1.4" /></g><polyline points="565.1,219.3 567.1,219.3 569.9,219.2 573.3,219.1 576.8,219.0 580.4,218.9 583.6,218.8 586.6,218.6 589.6,218.3 592.6,218.0 595.5,217.8 598.2,217.7 600.6,217.9 602.7,218.4 604.5,219.2 606.0,220.2 607.5,221.2 609.0,222.2 610.6,223.0 612.2,223.9 613.7,224.8 615.3,225.6 616.9,226.4 618.6,227.0 620.5,227.3 622.6,227.4 624.7,227.3 627.0,227.0 629.4,226.5 632.0,226.0 634.7,225.3 637.7,224.5 640.9,223.5 644.3,222.4 647.8,221.3 651.2,220.0 654.6,218.8 658.0,217.5 661.5,216.2 664.9,214.9 668.3,213.5 671.5,211.9 674.5,210.2 677.2,208.4 679.6,206.5 681.8,204.5 684.0,202.3 686.3,200.0 688.7,197.5 691.5,194.6 694.4,191.4 697.4,188.0 700.4,184.7 703.2,181.6 705.8,179.0 707.9,176.8 709.8,175.0 711.5,173.4 713.1,171.9 715.0,170.5 717.1,169.0 719.6,167.6 722.4,166.3 725.3,165.0 728.3,163.7 731.3,162.5 734.2,161.1 737.0,159.6 739.9,158.1 742.7,156.6 745.6,155.1 748.4,153.5 751.2,152.0 754.1,150.4 756.9,148.7 759.8,147.1 762.6,145.5 765.4,144.1 768.0,142.9 770.4,142.0 772.7,141.1 774.8,140.5 777.0,140.1 779.4,139.9 782.0,140.0 785.0,140.6 788.3,141.7 791.8,143.0 795.3,144.3 798.8,145.5 802.0,146.3 805.0,146.7 807.9,146.9 810.8,147.0 813.5,146.9 816.3,146.6 819.0,146.3 821.6,145.6 824.2,144.6 826.7,143.4 829.2,142.3 831.9,141.8 834.6,142.0 837.5,143.2 840.5,145.2 843.5,147.7 846.6,150.4 849.8,152.9 853.0,154.8 856.3,156.4 859.7,157.8 863.1,159.1 866.5,160.1 869.8,160.8 873.0,161.0 876.0,160.6 878.8,159.5 881.5,158.0 884.2,156.5 887.0,155.2 890.0,154.3 893.2,154.0 896.7,153.9 900.2,154.1 903.7,154.3 907.0,154.4 910.0,154.3 912.8,153.9 915.4,153.4 917.8,152.8 920.1,152.1 922.1,151.4 924.0,150.6 925.7,149.7 927.1,148.6 928.4,147.5 929.4,146.5 930.3,145.5 931.0,144.9" fill="none" stroke="#c40000" stroke-width="1" stroke-linejoin="round" /><path d="M938.30 121.60 h2.6" stroke="#c9c9c9" stroke-width="0.9"/><text x="941.80" y="124.10" font-size="6.9" fill="#fff" text-anchor="start" font-family="Liberation Sans, sans-serif" >1.60020</text><path d="M938.30 145.70 h2.6" stroke="#c9c9c9" stroke-width="0.9"/><text x="941.80" y="148.20" font-size="6.9" fill="#fff" text-anchor="start" font-family="Liberation Sans, sans-serif" >1.59420</text><path d="M938.30 170.20 h2.6" stroke="#c9c9c9" stroke-width="0.9"/><text x="941.80" y="172.70" font-size="6.9" fill="#fff" text-anchor="start" font-family="Liberation Sans, sans-serif" >1.58060</text><path d="M938.30 194.60 h2.6" stroke="#c9c9c9" stroke-width="0.9"/><text x="941.80" y="197.10" font-size="6.9" fill="#fff" text-anchor="start" font-family="Liberation Sans, sans-serif" >1.56660</text><path d="M938.30 219.00 h2.6" stroke="#c9c9c9" stroke-width="0.9"/><text x="941.80" y="221.50" font-size="6.9" fill="#fff" text-anchor="start" font-family="Liberation Sans, sans-serif" >1.55300</text><path d="M938.30 243.20 h2.6" stroke="#c9c9c9" stroke-width="0.9"/><text x="941.80" y="245.70" font-size="6.9" fill="#fff" text-anchor="start" font-family="Liberation Sans, sans-serif" >1.53940</text><rect x="939.20" y="113.80" width="28.2" height="7.6" fill="#fff"/><text x="941.80" y="120.10" font-size="6.9" fill="#000" text-anchor="start" font-family="Liberation Sans, sans-serif" >1.61006</text><path d="M564.70 244.60 v2.6" stroke="#c9c9c9" stroke-width="0.9"/><text x="564.50" y="254.20" font-size="6.9" fill="#fff" text-anchor="start" font-family="Liberation Sans, sans-serif" >4 Jan 2011</text><path d="M613.40 244.60 v2.6" stroke="#c9c9c9" stroke-width="0.9"/><text x="613.20" y="254.20" font-size="6.9" fill="#fff" text-anchor="start" font-family="Liberation Sans, sans-serif" >7 Jan 04:00</text><path d="M662.10 244.60 v2.6" stroke="#c9c9c9" stroke-width="0.9"/><text x="661.90" y="254.20" font-size="6.9" fill="#fff" text-anchor="start" font-family="Liberation Sans, sans-serif" >11 Jan 20:00</text><path d="M710.80 244.60 v2.6" stroke="#c9c9c9" stroke-width="0.9"/><text x="710.60" y="254.20" font-size="6.9" fill="#fff" text-anchor="start" font-family="Liberation Sans, sans-serif" >14 Jan 12:00</text><path d="M759.50 244.60 v2.6" stroke="#c9c9c9" stroke-width="0.9"/><text x="759.30" y="254.20" font-size="6.9" fill="#fff" text-anchor="start" font-family="Liberation Sans, sans-serif" >19 Jan 04:00</text><path d="M808.20 244.60 v2.6" stroke="#c9c9c9" stroke-width="0.9"/><text x="808.00" y="254.20" font-size="6.9" fill="#fff" text-anchor="start" font-family="Liberation Sans, sans-serif" >21 Jan 20:00</text><path d="M856.90 244.60 v2.6" stroke="#c9c9c9" stroke-width="0.9"/><text x="856.70" y="254.20" font-size="6.9" fill="#fff" text-anchor="start" font-family="Liberation Sans, sans-serif" >26 Jan 12:00</text><path d="M905.60 244.60 v2.6" stroke="#c9c9c9" stroke-width="0.9"/><text x="905.40" y="254.20" font-size="6.9" fill="#fff" text-anchor="start" font-family="Liberation Sans, sans-serif" >31 Jan 04:00</text><text x="567.80" y="112.40" font-size="6.9" fill="#fff" text-anchor="start" font-family="Liberation Sans, sans-serif" textLength="41.4" lengthAdjust="spacingAndGlyphs">GBPUSD,H4</text><text x="614.00" y="112.40" font-size="6.9" fill="#fff" text-anchor="start" font-family="Liberation Sans, sans-serif" textLength="106.6" lengthAdjust="spacingAndGlyphs">1.61127 1.61221 1.60813 1.61006</text></svg>
<div class="a " style="left:144.8px;top:263.4px;width:413.4px;height:185.9px;background:#7391e4;border-radius:5px 5px 0 0"></div>
<div class="a " style="left:144.8px;top:263.4px;width:413.4px;height:23.4px;border-radius:5px 5px 0 0;background:linear-gradient(#8ea9ea 0,#9cb5f1 7%,#7e9ae3 16%,#7a96e0 55%,#80a2e6 72%,#83a9ea 92%,#7490e2 100%)"></div>
<svg class="a" style="left:150.4px;top:271.2px;" width="9.5" height="9" viewBox="0 0 9.5 9"><rect x="0.2" y="0.2" width="6.6" height="5" rx="0.8" fill="#f4f7ff"/><rect x="1.2" y="2.2" width="4.6" height="2.2" fill="#6f90e6"/><rect x="2.6" y="3.6" width="6.8" height="5.2" rx="0.8" fill="#f4f7ff"/><rect x="3.6" y="5.6" width="4.8" height="2.3" fill="#6f90e6"/><path d="M1.4 1.3 h1.2 M3.2 1.3 h1.2 M3.8 4.7 h1.2 M5.6 4.7 h1.2" stroke="#6f90e6" stroke-width="0.7"/></svg>
<div class="t " style="left:163.6px;top:270.1px;font-size:9.6px;color:#f4f7ff;letter-spacing:-0.059px;">USDCHF,H4</div>
<div class="a cb" style="left:503.3px;top:268px;width:14.9px;height:14.9px;"></div>
<div class="a " style="left:506.78px;top:277.44px;width:5.96px;height:2.38px;background:#fff"></div>
<div class="a cb" style="left:520.8px;top:268px;width:14.9px;height:14.9px;"></div>
<svg class="a" style="left:520.8px;top:268px;" width="14.9" height="14.9" viewBox="0 0 14.9 14.9"><g transform="scale(0.993333)"><rect x="3.5" y="3.5" width="8" height="7.5" fill="none" stroke="#fff" stroke-width="1.3"/><rect x="3" y="3" width="9" height="2.2" fill="#fff"/></g></svg>
<div class="a cb cbx" style="left:538.4px;top:268px;width:14.9px;height:14.9px;"></div>
<svg class="a" style="left:538.4px;top:268px;" width="14.9" height="14.9" viewBox="0 0 14.9 14.9"><g transform="scale(0.993333)"><path d="M3.8 3.8 L11.2 11.2 M11.2 3.8 L3.8 11.2" stroke="#fff" stroke-width="1.9" stroke-linecap="square"/></g></svg>
<div class="a " style="left:148px;top:286.7px;width:406.2px;height:0.9px;background:#a89e8c"></div>
<div class="a " style="left:148px;top:287.6px;width:407.6px;height:158.3px;background:#f2f4fc"></div>
<div class="a " style="left:148px;top:287.6px;width:406.2px;height:156.9px;background:#000"></div>
<svg class="a" style="left:0px;top:0px;" width="975" height="584" viewBox="0 0 975 584"><rect x="150.50" y="289.2" width="373.00" height="93.4" fill="none" stroke="#c9c9c9" stroke-width="1"/><rect x="150.50" y="385.2" width="373.00" height="45.5" fill="none" stroke="#c9c9c9" stroke-width="1"/><path d="M150.50 383.9 H523.50" stroke="#a8a8a8" stroke-width="1.9"/><path d="M150.50 370.6 H523.50" stroke="#8f99a6" stroke-width="0.9"/><g stroke="#98a4b0" stroke-width="0.82" stroke-dasharray="2.9 2.3" fill="none"><path d="M175.25 289.20 V382.60" /><path d="M199.60 289.20 V382.60" /><path d="M223.95 289.20 V382.60" /><path d="M248.30 289.20 V382.60" /><path d="M272.65 289.20 V382.60" /><path d="M297.00 289.20 V382.60" /><path d="M321.35 289.20 V382.60" /><path d="M345.70 289.20 V382.60" /><path d="M370.05 289.20 V382.60" /><path d="M394.40 289.20 V382.60" /><path d="M418.75 289.20 V382.60" /><path d="M443.10 289.20 V382.60" /><path d="M467.45 289.20 V382.60" /><path d="M491.80 289.20 V382.60" /><path d="M516.15 289.20 V382.60" /><path d="M150.50 307.60 H523.50" /><path d="M150.50 332.20 H523.50" /><path d="M150.50 357.80 H523.50" /><path d="M150.50 381.40 H523.50" /></g><g stroke="#98a4b0" stroke-width="0.82" stroke-dasharray="2.9 2.3" fill="none"><path d="M175.25 385.20 V430.70" /><path d="M199.60 385.20 V430.70" /><path d="M223.95 385.20 V430.70" /><path d="M248.30 385.20 V430.70" /><path d="M272.65 385.20 V430.70" /><path d="M297.00 385.20 V430.70" /><path d="M321.35 385.20 V430.70" /><path d="M345.70 385.20 V430.70" /><path d="M370.05 385.20 V430.70" /><path d="M394.40 385.20 V430.70" /><path d="M418.75 385.20 V430.70" /><path d="M443.10 385.20 V430.70" /><path d="M467.45 385.20 V430.70" /><path d="M491.80 385.20 V430.70" /><path d="M516.15 385.20 V430.70" /></g><g stroke="#00d000" stroke-width="0.95" fill="none"><path d="M151.49 359.07 V368.33 M151.49 366.83 h-1.3 M151.49 360.57 h1.3"/><path d="M154.57 350.59 V362.16 M154.57 360.66 h-1.3 M154.57 352.09 h1.3"/><path d="M157.66 354.44 V360.93 M157.66 359.43 h-1.3 M157.66 355.94 h1.3"/><path d="M160.75 354.75 V360.62 M160.75 359.12 h-1.3 M160.75 356.25 h1.3"/><path d="M163.83 349.81 V357.53 M163.83 356.03 h-1.3 M163.83 351.31 h1.3"/><path d="M166.92 349.04 V355.99 M166.92 354.49 h-1.3 M166.92 350.54 h1.3"/><path d="M169.54 322.81 V352.90 M169.54 351.40 h-1.3 M169.54 324.31 h1.3"/><path d="M172.32 315.86 V326.67 M172.32 325.17 h-1.3 M172.32 317.36 h1.3"/><path d="M175.41 315.09 V322.81 M175.41 321.31 h-1.3 M175.41 316.59 h1.3"/><path d="M178.49 315.09 V322.04 M178.49 320.54 h-1.3 M178.49 316.59 h1.3"/><path d="M181.58 311.23 V318.18 M181.58 316.68 h-1.3 M181.58 312.73 h1.3"/></g><g stroke="#c8c8c8" stroke-width="0.9"><path d="M151.80 412.2 V417.70"/><path d="M154.20 412.2 V416.20"/><path d="M156.60 412.2 V411.40"/><path d="M159.00 412.2 V411.20"/><path d="M161.40 412.2 V411.00"/><path d="M163.80 412.2 V410.70"/><path d="M166.20 412.2 V410.20"/><path d="M168.60 412.2 V408.70"/><path d="M171.00 412.2 V406.70"/><path d="M173.40 412.2 V404.20"/><path d="M175.80 412.2 V400.70"/><path d="M178.20 412.2 V398.20"/><path d="M180.60 412.2 V395.70"/><path d="M183.00 412.2 V398.70"/><path d="M185.40 412.2 V399.70"/></g><path d="M151 425.4 L181.5 403" stroke="#e01010" stroke-width="1" stroke-dasharray="2.2 1.6"/><text x="153.40" y="298.00" font-size="6.9" fill="#fff" text-anchor="start" font-family="Liberation Sans, sans-serif" textLength="42.0" lengthAdjust="spacingAndGlyphs">USDCHF,H4</text><text x="200.00" y="298.00" font-size="6.9" fill="#fff" text-anchor="start" font-family="Liberation Sans, sans-serif" textLength="106.6" lengthAdjust="spacingAndGlyphs">0.94080 0.94169 0.94002 0.94162</text><text x="153.30" y="395.00" font-size="6.9" fill="#fff" text-anchor="start" font-family="Liberation Sans, sans-serif" >MACD(12,26,9)</text><path d="M150.70 430.70 v2.6" stroke="#c9c9c9" stroke-width="0.9"/><text x="150.50" y="440.30" font-size="6.9" fill="#fff" text-anchor="start" font-family="Liberation Sans, sans-serif" >4 Jan 2011</text></svg>
<div class="a " style="left:558.4px;top:263.4px;width:414px;height:185.9px;background:#7391e4;border-radius:5px 5px 0 0"></div>
<div class="a " style="left:558.4px;top:263.4px;width:414px;height:23.4px;border-radius:5px 5px 0 0;background:linear-gradient(#8ea9ea 0,#9cb5f1 7%,#7e9ae3 16%,#7a96e0 55%,#80a2e6 72%,#83a9ea 92%,#7490e2 100%)"></div>
<svg class="a" style="left:564px;top:271.2px;" width="9.5" height="9" viewBox="0 0 9.5 9"><rect x="0.2" y="0.2" width="6.6" height="5" rx="0.8" fill="#f4f7ff"/><rect x="1.2" y="2.2" width="4.6" height="2.2" fill="#6f90e6"/><rect x="2.6" y="3.6" width="6.8" height="5.2" rx="0.8" fill="#f4f7ff"/><rect x="3.6" y="5.6" width="4.8" height="2.3" fill="#6f90e6"/><path d="M1.4 1.3 h1.2 M3.2 1.3 h1.2 M3.8 4.7 h1.2 M5.6 4.7 h1.2" stroke="#6f90e6" stroke-width="0.7"/></svg>
<div class="t " style="left:577.2px;top:270.1px;font-size:9.6px;color:#f4f7ff;letter-spacing:0.228px;">USDJPY,H4</div>
<div class="a cb" style="left:917.5px;top:268px;width:14.9px;height:14.9px;"></div>
<div class="a " style="left:920.98px;top:277.44px;width:5.96px;height:2.38px;background:#fff"></div>
<div class="a cb" style="left:935px;top:268px;width:14.9px;height:14.9px;"></div>
<svg class="a" style="left:935px;top:268px;" width="14.9" height="14.9" viewBox="0 0 14.9 14.9"><g transform="scale(0.993333)"><rect x="3.5" y="3.5" width="8" height="7.5" fill="none" stroke="#fff" stroke-width="1.3"/><rect x="3" y="3" width="9" height="2.2" fill="#fff"/></g></svg>
<div class="a cb cbx" style="left:952.6px;top:268px;width:14.9px;height:14.9px;"></div>
<svg class="a" style="left:952.6px;top:268px;" width="14.9" height="14.9" viewBox="0 0 14.9 14.9"><g transform="scale(0.993333)"><path d="M3.8 3.8 L11.2 11.2 M11.2 3.8 L3.8 11.2" stroke="#fff" stroke-width="1.9" stroke-linecap="square"/></g></svg>
<div class="a " style="left:561.6px;top:286.7px;width:406.8px;height:0.9px;background:#a89e8c"></div>
<div class="a " style="left:561.6px;top:287.6px;width:408.2px;height:158.3px;background:#f2f4fc"></div>
<div class="a " style="left:561.6px;top:287.6px;width:406.8px;height:156.9px;background:#000"></div>
<svg class="a" style="left:0px;top:0px;" width="975" height="584" viewBox="0 0 975 584"><rect x="564.50" y="290.3" width="374.10" height="92.4" fill="none" stroke="#c9c9c9" stroke-width="1"/><rect x="564.50" y="385.2" width="374.10" height="45.5" fill="none" stroke="#c9c9c9" stroke-width="1"/><path d="M564.50 384 H938.60" stroke="#a8a8a8" stroke-width="1.9"/><g stroke="#98a4b0" stroke-width="0.82" stroke-dasharray="2.9 2.3" fill="none"><path d="M590.55 290.30 V382.70" /><path d="M614.90 290.30 V382.70" /><path d="M639.25 290.30 V382.70" /><path d="M663.60 290.30 V382.70" /><path d="M687.95 290.30 V382.70" /><path d="M712.30 290.30 V382.70" /><path d="M736.65 290.30 V382.70" /><path d="M761.00 290.30 V382.70" /><path d="M785.35 290.30 V382.70" /><path d="M809.70 290.30 V382.70" /><path d="M834.05 290.30 V382.70" /><path d="M858.40 290.30 V382.70" /><path d="M882.75 290.30 V382.70" /><path d="M907.10 290.30 V382.70" /><path d="M931.45 290.30 V382.70" /><path d="M564.50 308.60 H938.60" /><path d="M564.50 333.00 H938.60" /><path d="M564.50 357.40 H938.60" /><path d="M564.50 381.80 H938.60" /></g><g stroke="#98a4b0" stroke-width="0.82" stroke-dasharray="2.9 2.3" fill="none"><path d="M590.55 385.20 V430.70" /><path d="M614.90 385.20 V430.70" /><path d="M639.25 385.20 V430.70" /><path d="M663.60 385.20 V430.70" /><path d="M687.95 385.20 V430.70" /><path d="M712.30 385.20 V430.70" /><path d="M736.65 385.20 V430.70" /><path d="M761.00 385.20 V430.70" /><path d="M785.35 385.20 V430.70" /><path d="M809.70 385.20 V430.70" /><path d="M834.05 385.20 V430.70" /><path d="M858.40 385.20 V430.70" /><path d="M882.75 385.20 V430.70" /><path d="M907.10 385.20 V430.70" /><path d="M931.45 385.20 V430.70" /><path d="M564.50 399.20 H938.60" /><path d="M564.50 409.00 H938.60" /><path d="M564.50 419.40 H938.60" /></g><path d="M564.50 372.2 H938.60" stroke="#8f99a6" stroke-width="0.9"/><path d="M760.41 341.81 V355.23" stroke="#00d800" stroke-width="0.95"/><rect x="758.71" y="344.16" width="3.4" height="2.35" fill="#ffffff" stroke="#00e000" stroke-width="0.8"/><path d="M766.49 345.84 V355.90" stroke="#00d800" stroke-width="0.95"/><rect x="764.79" y="347.51" width="3.4" height="2.35" fill="#ffffff" stroke="#00e000" stroke-width="0.8"/><path d="M772.58 342.48 V355.23" stroke="#00d800" stroke-width="0.95"/><rect x="770.98" y="347.51" width="3.2" height="2.35" fill="#000" stroke="#00e000" stroke-width="0.95"/><path d="M778.66 341.81 V349.86" stroke="#00d800" stroke-width="0.95"/><rect x="777.06" y="343.49" width="3.2" height="4.02" fill="#000" stroke="#00e000" stroke-width="0.95"/><path d="M784.75 330.75 V345.84" stroke="#00d800" stroke-width="0.95"/><rect x="783.14" y="331.75" width="3.2" height="12.41" fill="#000" stroke="#00e000" stroke-width="0.95"/><path d="M790.83 324.04 V347.51" stroke="#00d800" stroke-width="0.95"/><rect x="789.13" y="331.75" width="3.4" height="12.41" fill="#ffffff" stroke="#00e000" stroke-width="0.8"/><path d="M796.92 339.80 V354.22" stroke="#00d800" stroke-width="0.95"/><rect x="795.22" y="343.49" width="3.4" height="4.02" fill="#ffffff" stroke="#00e000" stroke-width="0.8"/><path d="M803.00 344.16 V350.87" stroke="#00d800" stroke-width="0.95"/><path d="M801.10 346.51 H804.90" stroke="#00ff00" stroke-width="1"/><path d="M809.09 293.86 V347.51" stroke="#00d800" stroke-width="0.95"/><rect x="807.49" y="319.68" width="3.2" height="26.16" fill="#000" stroke="#00e000" stroke-width="0.95"/><path d="M815.17 300.56 V321.69" stroke="#00d800" stroke-width="0.95"/><rect x="813.57" y="310.63" width="3.2" height="9.05" fill="#000" stroke="#00e000" stroke-width="0.95"/><path d="M821.26 302.24 V317.33" stroke="#00d800" stroke-width="0.95"/><rect x="819.56" y="309.95" width="3.4" height="5.70" fill="#ffffff" stroke="#00e000" stroke-width="0.8"/><path d="M827.34 308.95 V317.33" stroke="#00d800" stroke-width="0.95"/><path d="M825.44 313.98 H829.24" stroke="#00ff00" stroke-width="1"/><path d="M833.43 308.95 V327.39" stroke="#00d800" stroke-width="0.95"/><rect x="831.73" y="313.31" width="3.4" height="6.37" fill="#ffffff" stroke="#00e000" stroke-width="0.8"/><path d="M839.51 317.33 V326.39" stroke="#00d800" stroke-width="0.95"/><rect x="837.81" y="319.68" width="3.4" height="2.68" fill="#ffffff" stroke="#00e000" stroke-width="0.8"/><path d="M845.60 319.01 V326.39" stroke="#00d800" stroke-width="0.95"/><rect x="843.89" y="320.69" width="3.4" height="2.35" fill="#ffffff" stroke="#00e000" stroke-width="0.8"/><path d="M851.68 321.69 V353.21" stroke="#00d800" stroke-width="0.95"/><rect x="849.98" y="321.69" width="3.4" height="20.12" fill="#ffffff" stroke="#00e000" stroke-width="0.8"/><path d="M857.77 339.80 V355.23" stroke="#00d800" stroke-width="0.95"/><rect x="856.07" y="341.81" width="3.4" height="5.70" fill="#ffffff" stroke="#00e000" stroke-width="0.8"/><path d="M863.85 342.48 V350.87" stroke="#00d800" stroke-width="0.95"/><rect x="862.15" y="345.17" width="3.4" height="4.69" fill="#ffffff" stroke="#00e000" stroke-width="0.8"/><path d="M869.94 344.16 V353.21" stroke="#00d800" stroke-width="0.95"/><rect x="868.24" y="347.51" width="3.4" height="5.03" fill="#ffffff" stroke="#00e000" stroke-width="0.8"/><path d="M876.02 349.86 V358.58" stroke="#00d800" stroke-width="0.95"/><path d="M874.12 351.87 H877.92" stroke="#00ff00" stroke-width="1"/><path d="M882.11 340.81 V355.90" stroke="#00d800" stroke-width="0.95"/><rect x="880.50" y="344.16" width="3.2" height="8.38" fill="#000" stroke="#00e000" stroke-width="0.95"/><path d="M888.19 341.81 V355.23" stroke="#00d800" stroke-width="0.95"/><rect x="886.49" y="344.16" width="3.4" height="8.38" fill="#ffffff" stroke="#00e000" stroke-width="0.8"/><path d="M894.28 347.51 V359.25" stroke="#00d800" stroke-width="0.95"/><rect x="892.68" y="349.19" width="3.2" height="3.35" fill="#000" stroke="#00e000" stroke-width="0.95"/><path d="M900.36 347.51 V354.22" stroke="#00d800" stroke-width="0.95"/><rect x="898.66" y="349.86" width="3.4" height="2.01" fill="#ffffff" stroke="#00e000" stroke-width="0.8"/><path d="M906.45 347.51 V358.58" stroke="#00d800" stroke-width="0.95"/><rect x="904.75" y="350.87" width="3.4" height="5.03" fill="#ffffff" stroke="#00e000" stroke-width="0.8"/><path d="M912.53 354.22 V365.96" stroke="#00d800" stroke-width="0.95"/><rect x="910.83" y="355.23" width="3.4" height="5.70" fill="#ffffff" stroke="#00e000" stroke-width="0.8"/><path d="M918.62 357.57 V377.69" stroke="#00d800" stroke-width="0.95"/><rect x="916.91" y="360.26" width="3.4" height="14.08" fill="#ffffff" stroke="#00e000" stroke-width="0.8"/><path d="M924.70 369.31 V381.05" stroke="#00d800" stroke-width="0.95"/><rect x="923.10" y="370.99" width="3.2" height="3.35" fill="#000" stroke="#00e000" stroke-width="0.95"/><polyline points="760.0,423.0 762.2,422.4 765.4,421.7 768.8,420.8 771.8,419.6 774.2,418.1 776.4,416.3 778.4,414.5 780.2,412.9 781.6,411.6 782.9,410.4 784.0,409.5 785.2,408.9 786.4,408.6 787.6,408.6 788.8,408.9 790.2,409.6 791.8,410.8 793.5,412.7 795.2,414.4 796.9,415.6 798.5,416.1 800.2,416.2 801.7,415.8 803.0,414.6 803.9,412.4 804.7,409.4 805.3,406.0 806.0,402.8 806.6,399.7 807.1,396.5 807.8,393.5 808.7,391.1 809.9,389.4 811.4,388.3 813.0,387.7 814.7,387.8 816.3,388.7 818.0,390.4 819.9,392.5 822.1,394.5 824.7,396.4 827.7,398.5 830.8,400.5 833.8,402.2 836.9,403.2 840.0,403.8 843.0,404.4 845.5,405.5 847.6,407.5 849.2,410.0 850.7,412.5 852.3,414.6 853.7,416.1 855.0,417.3 856.6,418.3 859.0,418.9 862.7,419.3 867.4,419.4 872.1,419.3 875.7,418.9 878.0,418.2 879.4,417.2 880.5,416.2 881.8,415.6 883.1,415.6 884.3,416.1 885.6,416.6 887.5,416.9 890.0,416.9 893.2,416.7 896.4,416.4 899.2,416.3 901.5,416.0 903.6,415.7 905.6,415.7 907.6,416.3 909.7,417.9 911.8,420.2 913.9,422.7 916.0,424.6 918.3,426.0 920.7,427.2 922.8,428.0 924.3,428.7" fill="none" stroke="#1e8a94" stroke-width="1.1" stroke-linejoin="round" /><path d="M938.60 307.30 h2.6" stroke="#c9c9c9" stroke-width="0.9"/><text x="941.80" y="309.80" font-size="6.9" fill="#fff" text-anchor="start" font-family="Liberation Sans, sans-serif" >82.940</text><path d="M938.60 332.40 h2.6" stroke="#c9c9c9" stroke-width="0.9"/><text x="941.80" y="334.90" font-size="6.9" fill="#fff" text-anchor="start" font-family="Liberation Sans, sans-serif" >82.430</text><path d="M938.60 357.00 h2.6" stroke="#c9c9c9" stroke-width="0.9"/><text x="941.80" y="359.50" font-size="6.9" fill="#fff" text-anchor="start" font-family="Liberation Sans, sans-serif" >81.935</text><path d="M938.60 381.30 h2.6" stroke="#c9c9c9" stroke-width="0.9"/><text x="941.80" y="383.80" font-size="6.9" fill="#fff" text-anchor="start" font-family="Liberation Sans, sans-serif" >81.440</text><path d="M938.60 390.60 h2.6" stroke="#c9c9c9" stroke-width="0.9"/><text x="941.80" y="393.10" font-size="6.9" fill="#fff" text-anchor="start" font-family="Liberation Sans, sans-serif" >230.1172</text><path d="M938.60 398.60 h2.6" stroke="#c9c9c9" stroke-width="0.9"/><text x="941.80" y="401.10" font-size="6.9" fill="#fff" text-anchor="start" font-family="Liberation Sans, sans-serif" >100</text><path d="M938.60 408.40 h2.6" stroke="#c9c9c9" stroke-width="0.9"/><text x="941.80" y="410.90" font-size="6.9" fill="#fff" text-anchor="start" font-family="Liberation Sans, sans-serif" >0.00</text><path d="M938.60 419.00 h2.6" stroke="#c9c9c9" stroke-width="0.9"/><text x="941.80" y="421.50" font-size="6.9" fill="#fff" text-anchor="start" font-family="Liberation Sans, sans-serif" >-100</text><path d="M938.60 426.30 h2.6" stroke="#c9c9c9" stroke-width="0.9"/><text x="941.80" y="428.80" font-size="6.9" fill="#fff" text-anchor="start" font-family="Liberation Sans, sans-serif" >-211.638</text><rect x="939.20" y="367.50" width="28.2" height="7.6" fill="#fff"/><text x="941.80" y="373.80" font-size="6.9" fill="#000" text-anchor="start" font-family="Liberation Sans, sans-serif" >81.636</text><path d="M759.80 430.70 v2.6" stroke="#c9c9c9" stroke-width="0.9"/><text x="759.60" y="440.30" font-size="6.9" fill="#fff" text-anchor="start" font-family="Liberation Sans, sans-serif" >26 Jan 00:00</text><path d="M808.50 430.70 v2.6" stroke="#c9c9c9" stroke-width="0.9"/><text x="808.30" y="440.30" font-size="6.9" fill="#fff" text-anchor="start" font-family="Liberation Sans, sans-serif" >27 Jan 08:00</text><path d="M857.20 430.70 v2.6" stroke="#c9c9c9" stroke-width="0.9"/><text x="857.00" y="440.30" font-size="6.9" fill="#fff" text-anchor="start" font-family="Liberation Sans, sans-serif" >28 Jan 16:00</text><path d="M905.90 430.70 v2.6" stroke="#c9c9c9" stroke-width="0.9"/><text x="905.70" y="440.30" font-size="6.9" fill="#fff" text-anchor="start" font-family="Liberation Sans, sans-serif" >1 Feb 00:00</text><text x="568.60" y="298.20" font-size="6.9" fill="#fff" text-anchor="start" font-family="Liberation Sans, sans-serif" textLength="39.0" lengthAdjust="spacingAndGlyphs">USDJPY,H4</text><text x="613.20" y="298.20" font-size="6.9" fill="#fff" text-anchor="start" font-family="Liberation Sans, sans-serif" textLength="89.6" lengthAdjust="spacingAndGlyphs">81.583 81.652 81.456 81.636</text></svg>
<div class="a " style="left:142.4px;top:449.3px;width:830.6px;height:1.2px;background:#8c8a80"></div>
<div class="a " style="left:142.4px;top:450.5px;width:830.6px;height:16.2px;background:#ece9d8"></div>
<div class="a " style="left:142.4px;top:466.6px;width:830.6px;height:0.7px;background:#f8f7f0"></div>
<div class="a " style="left:145.4px;top:449.3px;width:60px;height:16.4px;background:#fff;border:1px solid #3a3a36;border-top:none;border-radius:0 0 2px 2px"></div>
<div class="t " style="left:153.4px;top:452.6px;font-size:7.9px;color:#111;">EURUSD,H4</div>
<svg class="a" style="left:952px;top:456px;" width="18" height="7" viewBox="0 0 18 7"><path d="M4 0.3 V6.3 L0.8 3.3 Z M14 0.3 V6.3 L17.2 3.3 Z" fill="#aaa796"/></svg>
<div class="a " style="left:2px;top:467.2px;width:971px;height:0.8px;background:#f6f5ee"></div>
<div class="a " style="left:2px;top:467.7px;width:971px;height:100px;background:#ece9d8"></div>
<svg class="a" style="left:3.4px;top:471px;" width="4.6" height="4.6" viewBox="0 0 4.6 4.6"><path d="M0.4 0.4 L4.2 4.2 M4.2 0.4 L0.4 4.2" stroke="#111" stroke-width="1.2"/></svg>
<div class="a " style="left:2.4px;top:480.6px;width:8.2px;height:86.4px;background:linear-gradient(#86a4ec,#7b9ae6)"></div>
<div class="t" style="left:1.4px;top:566px;font-size:8px;color:#d4dff9;transform-origin:0 0;transform:rotate(-90deg);letter-spacing:0.15px;-webkit-text-stroke-width:0">Terminal</div>
<div class="a " style="left:12.2px;top:469.6px;width:960.8px;height:82.6px;background:#fff"></div>
<div class="a " style="left:12.2px;top:469.6px;width:960.8px;height:15.2px;background:#ece9d8;border-bottom:1px solid #cbc7b8;box-shadow:inset 0 -2px 0 #e2dfcf"></div>
<div class="t " style="left:19px;top:472.4px;font-size:8.4px;color:#111;letter-spacing:-0.285px;">Time</div>
<div class="t " style="left:117px;top:472.4px;font-size:8.4px;color:#111;letter-spacing:-0.199px;">From</div>
<div class="a " style="left:109.6px;top:471px;width:1px;height:12px;background:#c9c6b6"></div>
<div class="a " style="left:110.6px;top:471px;width:1px;height:12px;background:#fff"></div>
<div class="a " style="left:970.6px;top:471px;width:1px;height:12px;background:#c9c6b6"></div>
<div class="a " style="left:12.2px;top:485.4px;width:961px;height:15.2px;background:#e9e9e9"></div>
<svg class="a" style="left:14.2px;top:489.4px;" width="9.6" height="7" viewBox="0 0 9.6 7"><rect x="0.5" y="0.5" width="8.6" height="6" rx="0.8" fill="#ecd48c" stroke="#a8842e" stroke-width="1"/><path d="M0.8 0.9 L4.8 4.2 L8.8 0.9" stroke="#a8842e" stroke-width="0.9" fill="none"/><path d="M0.8 6.2 L3.6 3.4 M8.8 6.2 L6 3.4" stroke="#c9a852" stroke-width="0.6" fill="none"/></svg>
<div class="t " style="left:28.7px;top:487px;font-size:8.6px;color:#111;font-weight:bold;letter-spacing:0.37px;">2011.02.01 12:41</div>
<div class="t " style="left:113.5px;top:487px;font-size:8.6px;color:#111;font-weight:bold;letter-spacing:0.183px;">Sunbird Trading</div>
<div class="a " style="left:12.2px;top:515.45px;width:961px;height:0.8px;background:#ededed"></div>
<svg class="a" style="left:14.2px;top:504.8px;" width="9.6" height="7" viewBox="0 0 9.6 7"><rect x="0.5" y="0.5" width="8.6" height="6" rx="0.8" fill="#ecd48c" stroke="#a8842e" stroke-width="1"/><path d="M0.8 0.9 L4.8 4.2 L8.8 0.9" stroke="#a8842e" stroke-width="0.9" fill="none"/><path d="M0.8 6.2 L3.6 3.4 M8.8 6.2 L6 3.4" stroke="#c9a852" stroke-width="0.6" fill="none"/></svg>
<div class="t " style="left:28.7px;top:502.4px;font-size:8.6px;color:#111;font-weight:bold;letter-spacing:0.338px;">2007.09.25 16:00</div>
<div class="t " style="left:113.5px;top:502.4px;font-size:8.6px;color:#111;font-weight:bold;letter-spacing:0.183px;">Sunbird Trading</div>
<div class="a " style="left:12.2px;top:515.9px;width:961px;height:15.2px;background:#e9e9e9"></div>
<svg class="a" style="left:14.2px;top:520.2px;" width="9.6" height="7" viewBox="0 0 9.6 7"><rect x="0.5" y="0.5" width="8.6" height="6" rx="0.8" fill="#ecd48c" stroke="#a8842e" stroke-width="1"/><path d="M0.8 0.9 L4.8 4.2 L8.8 0.9" stroke="#a8842e" stroke-width="0.9" fill="none"/><path d="M0.8 6.2 L3.6 3.4 M8.8 6.2 L6 3.4" stroke="#c9a852" stroke-width="0.6" fill="none"/></svg>
<div class="t " style="left:28.7px;top:517.8px;font-size:8.6px;color:#111;font-weight:bold;letter-spacing:0.338px;">2007.09.25 15:58</div>
<div class="t " style="left:113.5px;top:517.8px;font-size:8.6px;color:#111;font-weight:bold;letter-spacing:0.183px;">Sunbird Trading</div>
<div class="a " style="left:12.2px;top:545.95px;width:961px;height:0.8px;background:#ededed"></div>
<svg class="a" style="left:14.2px;top:535.5px;" width="9.6" height="7" viewBox="0 0 9.6 7"><rect x="0.5" y="0.5" width="8.6" height="6" rx="0.8" fill="#ecd48c" stroke="#a8842e" stroke-width="1"/><path d="M0.8 0.9 L4.8 4.2 L8.8 0.9" stroke="#a8842e" stroke-width="0.9" fill="none"/><path d="M0.8 6.2 L3.6 3.4 M8.8 6.2 L6 3.4" stroke="#c9a852" stroke-width="0.6" fill="none"/></svg>
<div class="t " style="left:28.7px;top:533.1px;font-size:8.6px;color:#111;font-weight:bold;letter-spacing:0.338px;">2007.09.25 15:56</div>
<div class="t " style="left:113.5px;top:533.1px;font-size:8.6px;color:#111;font-weight:bold;letter-spacing:0.183px;">Sunbird Trading</div>
<div class="a " style="left:110px;top:485.4px;width:0.9px;height:61px;background:#e3e3e3"></div>
<div class="a " style="left:12.2px;top:552px;width:961px;height:1px;background:#2e2e2a"></div>
<div class="t " style="left:21.4px;top:553.6px;font-size:8.4px;color:#9a9787;letter-spacing:-0.283px;">Trade</div>
<div class="a " style="left:50.3px;top:554.6px;width:1px;height:9.6px;background:#9a9787"></div>
<div class="t " style="left:57.4px;top:553.6px;font-size:8.4px;color:#9a9787;letter-spacing:-0.08px;">Account History</div>
<div class="a " style="left:123.6px;top:554.6px;width:1px;height:9.6px;background:#9a9787"></div>
<div class="t " style="left:130.7px;top:553.6px;font-size:8.4px;color:#9a9787;letter-spacing:-0.115px;">Alerts</div>
<div class="a " style="left:160.2px;top:552px;width:44px;height:14px;background:#fff;border:1px solid #2e2e2a;border-top:none;border-radius:0 0 2px 2px"></div>
<div class="t " style="left:167.2px;top:553.4px;font-size:7.8px;color:#111;">Mailbox</div>
<div class="a " style="left:2px;top:567.2px;width:971px;height:1px;background:#fbfaf5"></div>
<div class="a " style="left:2px;top:568.9px;width:971px;height:0.9px;background:#cbc8b6"></div>
<div class="a " style="left:2px;top:569.8px;width:971px;height:0.9px;background:#f8f7f0"></div>
<div class="t " style="left:2.6px;top:573.2px;font-size:8.4px;color:#111;letter-spacing:-0.32px;">For Help, press F1</div>
<div class="a " style="left:801px;top:572px;width:1px;height:11px;background:#b7b4a4"></div>
<div class="a " style="left:851.4px;top:572px;width:1px;height:11px;background:#b7b4a4"></div>
<svg class="a" style="left:856px;top:574.5px;" width="18" height="8" viewBox="0 0 18 8"><rect x="0.0" y="0" width="1.5" height="8.0" fill="#8c962c"/><rect x="0.0" y="8.0" width="1.5" height="0.0" fill="#c23a28"/><rect x="2.3" y="0" width="1.5" height="7.0" fill="#8c962c"/><rect x="2.3" y="7.0" width="1.5" height="1.1" fill="#c23a28"/><rect x="4.6" y="0" width="1.5" height="5.9" fill="#8c962c"/><rect x="4.6" y="5.9" width="1.5" height="2.1" fill="#c23a28"/><rect x="6.9" y="0" width="1.5" height="4.8" fill="#8c962c"/><rect x="6.9" y="4.8" width="1.5" height="3.2" fill="#c23a28"/><rect x="9.2" y="0" width="1.5" height="3.8" fill="#8c962c"/><rect x="9.2" y="3.8" width="1.5" height="4.2" fill="#c23a28"/><rect x="11.5" y="0" width="1.5" height="2.8" fill="#8c962c"/><rect x="11.5" y="2.8" width="1.5" height="5.2" fill="#c23a28"/><rect x="13.8" y="0" width="1.5" height="1.7" fill="#8c962c"/><rect x="13.8" y="1.7" width="1.5" height="6.3" fill="#c23a28"/><rect x="16.1" y="0" width="1.5" height="0.6" fill="#8c962c"/><rect x="16.1" y="0.6" width="1.5" height="7.4" fill="#c23a28"/></svg>
<div class="t " style="left:901.5px;top:573.3px;font-size:8.4px;color:#111;letter-spacing:-0.175px;">669/0 kb</div>
<div class="a " style="left:181.2px;top:300.5px;width:577.8px;height:290px;background:#0c50de;border-radius:5px 5px 0 0"></div>
<div class="a " style="left:181.2px;top:300.5px;width:577.8px;height:21.2px;border-radius:5px 5px 0 0;background:linear-gradient(#0a58e2 0,#2e80fa 9%,#1166f0 22%,#0a5ae6 45%,#0a56e0 75%,#0c58e6 90%,#0a44c4 100%)"></div>
<div class="a " style="left:183.8px;top:321.5px;width:572.8px;height:270px;background:#ece9d8"></div>
<div class="t " style="left:186.4px;top:305.6px;font-size:9.9px;color:#fff;font-weight:bold;letter-spacing:0.035px;text-shadow:0.6px 0.6px 0 #0a3aa8;-webkit-text-stroke-width:0;">Order</div>
<div class="a " style="left:704.6px;top:303.8px;width:15.8px;height:15.8px;border-radius:3px;border:1px solid #e6eefc;background:linear-gradient(135deg,#5a90f6,#2a62e0 50%,#1c4ec8)"></div>
<div class="a " style="left:708.4px;top:313.4px;width:6.4px;height:2.6px;background:#fff"></div>
<div class="a " style="left:722.3px;top:303.8px;width:15.8px;height:15.8px;border-radius:3px;border:1px solid #86a6ee;background:linear-gradient(135deg,#4a7ef0,#2a5ee0 50%,#2254d2)"></div>
<svg class="a" style="left:722.3px;top:303.8px;" width="15.8" height="15.8" viewBox="0 0 15.8 15.8"><rect x="4" y="4.2" width="8" height="7.4" fill="none" stroke="#7f9ff0" stroke-width="1.2"/><rect x="3.6" y="3.6" width="8.8" height="2" fill="#7f9ff0"/></svg>
<div class="a " style="left:739.9px;top:303.8px;width:15.8px;height:15.8px;border-radius:3px;border:1px solid #f2e2dc;background:linear-gradient(135deg,#f08468,#e2482a 45%,#c8381c)"></div>
<svg class="a" style="left:739.9px;top:303.8px;" width="15.8" height="15.8" viewBox="0 0 15.8 15.8"><path d="M4.3 4.3 L11.5 11.5 M11.5 4.3 L4.3 11.5" stroke="#fff" stroke-width="2" stroke-linecap="square"/></svg>
<div class="a " style="left:190.2px;top:332.2px;width:227px;height:247.6px;background:#fff;border:1px solid #9c9a8e;border-right-color:#fff;border-bottom-color:#fff"></div>
<svg class="a" style="left:0px;top:0px;" width="975" height="584" viewBox="0 0 975 584"><rect x="192.80" y="335.40" width="193.00" height="242.60" fill="none" stroke="#2a2a2a" stroke-width="1"/><g stroke="#cfcfcf" stroke-width="0.9" stroke-dasharray="2.2 2.4" fill="none"><path d="M218.00 335.40 V578.00"/><path d="M242.60 335.40 V578.00"/><path d="M266.90 335.40 V578.00"/><path d="M291.30 335.40 V578.00"/><path d="M315.70 335.40 V578.00"/><path d="M340.10 335.40 V578.00"/><path d="M364.50 335.40 V578.00"/><path d="M192.80 358.00 H385.80"/><path d="M192.80 382.40 H385.80"/><path d="M192.80 406.80 H385.80"/><path d="M192.80 431.20 H385.80"/><path d="M192.80 455.60 H385.80"/><path d="M192.80 480.00 H385.80"/><path d="M192.80 504.40 H385.80"/><path d="M192.80 528.80 H385.80"/><path d="M192.80 553.20 H385.80"/><path d="M192.80 577.60 H385.80"/></g><polyline points="193.5,347.9 195.3,346.7 196.5,351.9 198.1,361.2 199.6,375.0 201.2,384.2 202.1,405.8 202.7,422.7 203.6,416.5 204.5,419.6 205.8,427.3 209.5,427.9 215.0,428.8 215.9,433.5 216.8,440.2 217.2,445.0 218.6,448.0 220.0,447.6 221.0,440.0 221.2,430.4 222.7,415.0 224.2,396.5 225.8,395.9 226.7,401.2 227.6,396.5 228.8,402.7 230.4,406.4 231.3,416.5 231.9,424.2 232.5,413.5 233.2,408.2 234.1,404.8 385.8,404.7" fill="none" stroke="#3b8cf2" stroke-width="1" stroke-linejoin="round" /><polyline points="193.5,466.4 195.9,465.2 197.2,465.8 198.1,467.9 199.6,490.4 201.2,515.0 202.1,541.2 203.0,525.8 203.9,533.5 205.8,542.7 208.2,543.9 210.1,542.7 211.9,544.5 215.0,544.2 215.9,550.4 216.8,558.1 217.5,564.2 218.7,566.1 219.9,564.2 221.2,556.5 222.7,536.5 223.6,518.1 224.5,506.4 225.8,510.4 227.3,513.8 228.5,515.6 229.8,518.1 231.0,525.8 231.9,536.5 232.5,527.3 233.2,518.7 234.1,521.8 385.8,521.8" fill="none" stroke="#f47c72" stroke-width="1" stroke-linejoin="round" /><path d="M385.80 358.20 h1.8" stroke="#2a2a2a" stroke-width="0.9"/><text x="389.70" y="360.70" font-size="6.9" fill="#111" text-anchor="start" font-family="Liberation Sans, sans-serif" >0.99799</text><path d="M385.80 382.60 h1.8" stroke="#2a2a2a" stroke-width="0.9"/><text x="389.70" y="385.10" font-size="6.9" fill="#111" text-anchor="start" font-family="Liberation Sans, sans-serif" >0.99793</text><path d="M385.80 431.00 h1.8" stroke="#2a2a2a" stroke-width="0.9"/><text x="389.70" y="433.50" font-size="6.9" fill="#111" text-anchor="start" font-family="Liberation Sans, sans-serif" >0.99781</text><path d="M385.80 456.00 h1.8" stroke="#2a2a2a" stroke-width="0.9"/><text x="389.70" y="458.50" font-size="6.9" fill="#111" text-anchor="start" font-family="Liberation Sans, sans-serif" >0.99775</text><path d="M385.80 480.20 h1.8" stroke="#2a2a2a" stroke-width="0.9"/><text x="389.70" y="482.70" font-size="6.9" fill="#111" text-anchor="start" font-family="Liberation Sans, sans-serif" >0.99769</text><path d="M385.80 504.20 h1.8" stroke="#2a2a2a" stroke-width="0.9"/><text x="389.70" y="506.70" font-size="6.9" fill="#111" text-anchor="start" font-family="Liberation Sans, sans-serif" >0.99763</text><path d="M385.80 528.40 h1.8" stroke="#2a2a2a" stroke-width="0.9"/><text x="389.70" y="530.90" font-size="6.9" fill="#111" text-anchor="start" font-family="Liberation Sans, sans-serif" >0.99757</text><path d="M385.80 552.80 h1.8" stroke="#2a2a2a" stroke-width="0.9"/><text x="389.70" y="555.30" font-size="6.9" fill="#111" text-anchor="start" font-family="Liberation Sans, sans-serif" >0.99751</text><path d="M385.80 575.00 h1.8" stroke="#2a2a2a" stroke-width="0.9"/><text x="389.70" y="577.50" font-size="6.9" fill="#111" text-anchor="start" font-family="Liberation Sans, sans-serif" >0.99745</text><rect x="387.4" y="400.9" width="28.4" height="7.8" fill="#3b8cf2"/><text x="389.70" y="407.30" font-size="6.9" fill="#fff" text-anchor="start" font-family="Liberation Sans, sans-serif" >0.99788</text><rect x="387.4" y="518.0" width="28.4" height="7.8" fill="#f25c4c"/><text x="389.70" y="524.40" font-size="6.9" fill="#fff" text-anchor="start" font-family="Liberation Sans, sans-serif" >0.99759</text><text x="195.20" y="342.60" font-size="6.9" fill="#111" text-anchor="start" font-family="Liberation Sans, sans-serif" >USDCAD</text></svg>
<div class="t " style="left:462.3px;top:333.7px;font-size:8.3px;color:#111;letter-spacing:-0.214px;">Symbol:</div>
<div class="t " style="left:461.6px;top:353.5px;font-size:8.3px;color:#111;letter-spacing:-0.099px;">Volume:</div>
<div class="t " style="left:453.6px;top:373.2px;font-size:8.3px;color:#111;letter-spacing:-0.202px;">Stop Loss:</div>
<div class="t " style="left:454.4px;top:393px;font-size:8.3px;color:#111;letter-spacing:-0.24px;">Comment:</div>
<div class="t " style="left:470.8px;top:413px;font-size:8.3px;color:#111;letter-spacing:-0.025px;">Type:</div>
<div class="a " style="left:498px;top:332.3px;width:245.9px;height:15.2px;background:#fff;border:1px solid #7f9db9"></div>
<div class="a " style="left:731.2px;top:333.5px;width:11.6px;height:12.8px;border-radius:2px;background:linear-gradient(#d0dcfc,#b7c9f7 80%,#a9bdf2);border:1px solid #c5d3fa;box-shadow:0 0 0 0.5px #b4c6f4"></div>
<svg class="a" style="left:733.8px;top:338.3px;" width="6.4" height="4" viewBox="0 0 6.4 4"><path d="M0.6 0.6 L3.2 3.2 L5.8 0.6" stroke="#3d4f7c" stroke-width="1.5" fill="none"/></svg>
<div class="t " style="left:501.2px;top:333.9px;font-size:8.4px;color:#111;letter-spacing:-0.311px;">USDCAD, US Dollar vs Canadian Dollar</div>
<div class="a " style="left:498px;top:351.7px;width:80px;height:15.8px;background:#fff;border:1px solid #7f9db9"></div>
<div class="a " style="left:565.2px;top:352.9px;width:11.6px;height:13.4px;border-radius:2px;background:linear-gradient(#d0dcfc,#b7c9f7 80%,#a9bdf2);border:1px solid #c5d3fa;box-shadow:0 0 0 0.5px #b4c6f4"></div>
<svg class="a" style="left:567.8px;top:358px;" width="6.4" height="4" viewBox="0 0 6.4 4"><path d="M0.6 0.6 L3.2 3.2 L5.8 0.6" stroke="#3d4f7c" stroke-width="1.5" fill="none"/></svg>
<div class="a " style="left:502.8px;top:354.4px;width:17.4px;height:9.8px;background:#316ac5"></div>
<div class="t " style="left:502.2px;top:353.6px;font-size:8.4px;color:#fff;letter-spacing:0.15px;">5.00</div>
<div class="a " style="left:498px;top:371.6px;width:80px;height:14.8px;background:#fff;border:1px solid #7f9db9"></div>
<div class="a " style="left:565.4px;top:372.8px;width:11.4px;height:12.4px;border-radius:2px;background:linear-gradient(#d0dcfc,#b4c6f6);border:1px solid #c5d3fa;box-shadow:0 0 0 0.4px #b4c6f4"></div>
<svg class="a" style="left:568.6px;top:374.6px;" width="5" height="3.2" viewBox="0 0 5 3.2"><path d="M0.5 2.6 L2.5 0.6 L4.5 2.6" stroke="#3d4f7c" stroke-width="1.3" fill="none"/></svg>
<svg class="a" style="left:568.6px;top:380.2px;" width="5" height="3.2" viewBox="0 0 5 3.2"><path d="M0.5 0.6 L2.5 2.6 L4.5 0.6" stroke="#3d4f7c" stroke-width="1.3" fill="none"/></svg>
<div class="t " style="left:530.4px;top:373.2px;font-size:8.4px;color:#111;letter-spacing:0.039px;">0.00000</div>
<div class="t " style="left:614.9px;top:373.2px;font-size:8.4px;color:#111;letter-spacing:0.062px;">Take Profit:</div>
<div class="a " style="left:663.4px;top:371.6px;width:80.5px;height:14.8px;background:#fff;border:1px solid #7f9db9"></div>
<div class="a " style="left:731.2px;top:372.8px;width:11.6px;height:12.4px;border-radius:2px;background:#f3f2ea;border:1px solid #dcdacd"></div>
<svg class="a" style="left:734.5px;top:374.6px;" width="5" height="3.2" viewBox="0 0 5 3.2"><path d="M0.5 2.6 L2.5 0.6 L4.5 2.6" stroke="#c6c4b6" stroke-width="1.3" fill="none"/></svg>
<svg class="a" style="left:734.5px;top:380.2px;" width="5" height="3.2" viewBox="0 0 5 3.2"><path d="M0.5 0.6 L2.5 2.6 L4.5 0.6" stroke="#c6c4b6" stroke-width="1.3" fill="none"/></svg>
<div class="t " style="left:695.6px;top:373.2px;font-size:8.4px;color:#111;letter-spacing:-0.027px;">0.00000</div>
<div class="a " style="left:498px;top:391.4px;width:245.9px;height:15px;background:#fff;border:1px solid #7f9db9"></div>
<div class="a " style="left:498px;top:411.6px;width:245.9px;height:14.8px;background:#efede2;border:1px solid #cfcdbf"></div>
<div class="a " style="left:731.2px;top:412.8px;width:11.6px;height:12.4px;border-radius:2px;background:#f3f2ea;border:1px solid #dcdacd"></div>
<svg class="a" style="left:733.8px;top:417.4px;" width="6.4" height="4" viewBox="0 0 6.4 4"><path d="M0.6 0.6 L3.2 3.2 L5.8 0.6" stroke="#c2c0b2" stroke-width="1.5" fill="none"/></svg>
<div class="t " style="left:501.2px;top:413.2px;font-size:8.4px;color:#aaa89a;letter-spacing:-0.126px;">Market Execution</div>
<div class="a " style="left:424px;top:438.2px;width:325.6px;height:141.8px;border:1px solid #d2d0bf;border-radius:3px;box-shadow:inset 0 0 0 0.5px #f4f2e8"></div>
<div class="a " style="left:428.4px;top:434px;width:62.6px;height:9px;background:#ece9d8"></div>
<div class="t " style="left:430px;top:432.6px;font-size:8.4px;color:#0b48d8;letter-spacing:-0.093px;">Order Execution</div>
<div class="t " style="left:473px;top:453.6px;font-size:12.3px;color:#111;letter-spacing:0.147px;">#3630017 sell 1.00 USDCAD at 0.99753</div>
<div class="t " style="left:556.7px;top:470px;font-size:12.3px;color:#111;letter-spacing:0.131px;">successful</div>
<div class="a " style="left:435.4px;top:526.4px;width:142px;height:16.4px;border-radius:2.5px;border:1px solid #46649c;background:linear-gradient(#fdfdfb 0,#f4f3ed 55%,#e8e6da 90%,#dcd8c8 100%);box-shadow:inset 0 0 0 0.8px #dbe4f6"></div>
<div class="t " style="left:500.33px;top:528.8px;font-size:8.4px;color:#111;">OK</div>
<div class="a " style="left:595px;top:526.4px;width:142.6px;height:16.4px;border-radius:2.5px;border:1px solid #46649c;background:linear-gradient(#fdfdfb 0,#f4f3ed 55%,#e8e6da 90%,#dcd8c8 100%);box-shadow:inset 0 0 0 0.8px #dbe4f6"></div>
<div class="t " style="left:657.66px;top:528.8px;font-size:8.4px;color:#111;">Print</div>
<div class="t " style="left:473px;top:549.8px;font-size:8.4px;color:#111;letter-spacing:-0.018px;">You can print out this information by pressing "Print" button.</div>
<div class="a " style="left:972px;top:20px;width:1px;height:562px;background:#f6f5ee"></div>
<div class="a " style="left:0px;top:0px;width:975px;height:2px;background:#b3b3b3"></div>
<div class="a " style="left:0px;top:0px;width:2px;height:584px;background:#b3b3b3"></div>
<div class="a " style="left:973px;top:0px;width:2px;height:584px;background:#b3b3b3"></div>
<div class="a " style="left:0px;top:582.2px;width:975px;height:2px;background:#b3b3b3"></div>
</div>
</body></html>
